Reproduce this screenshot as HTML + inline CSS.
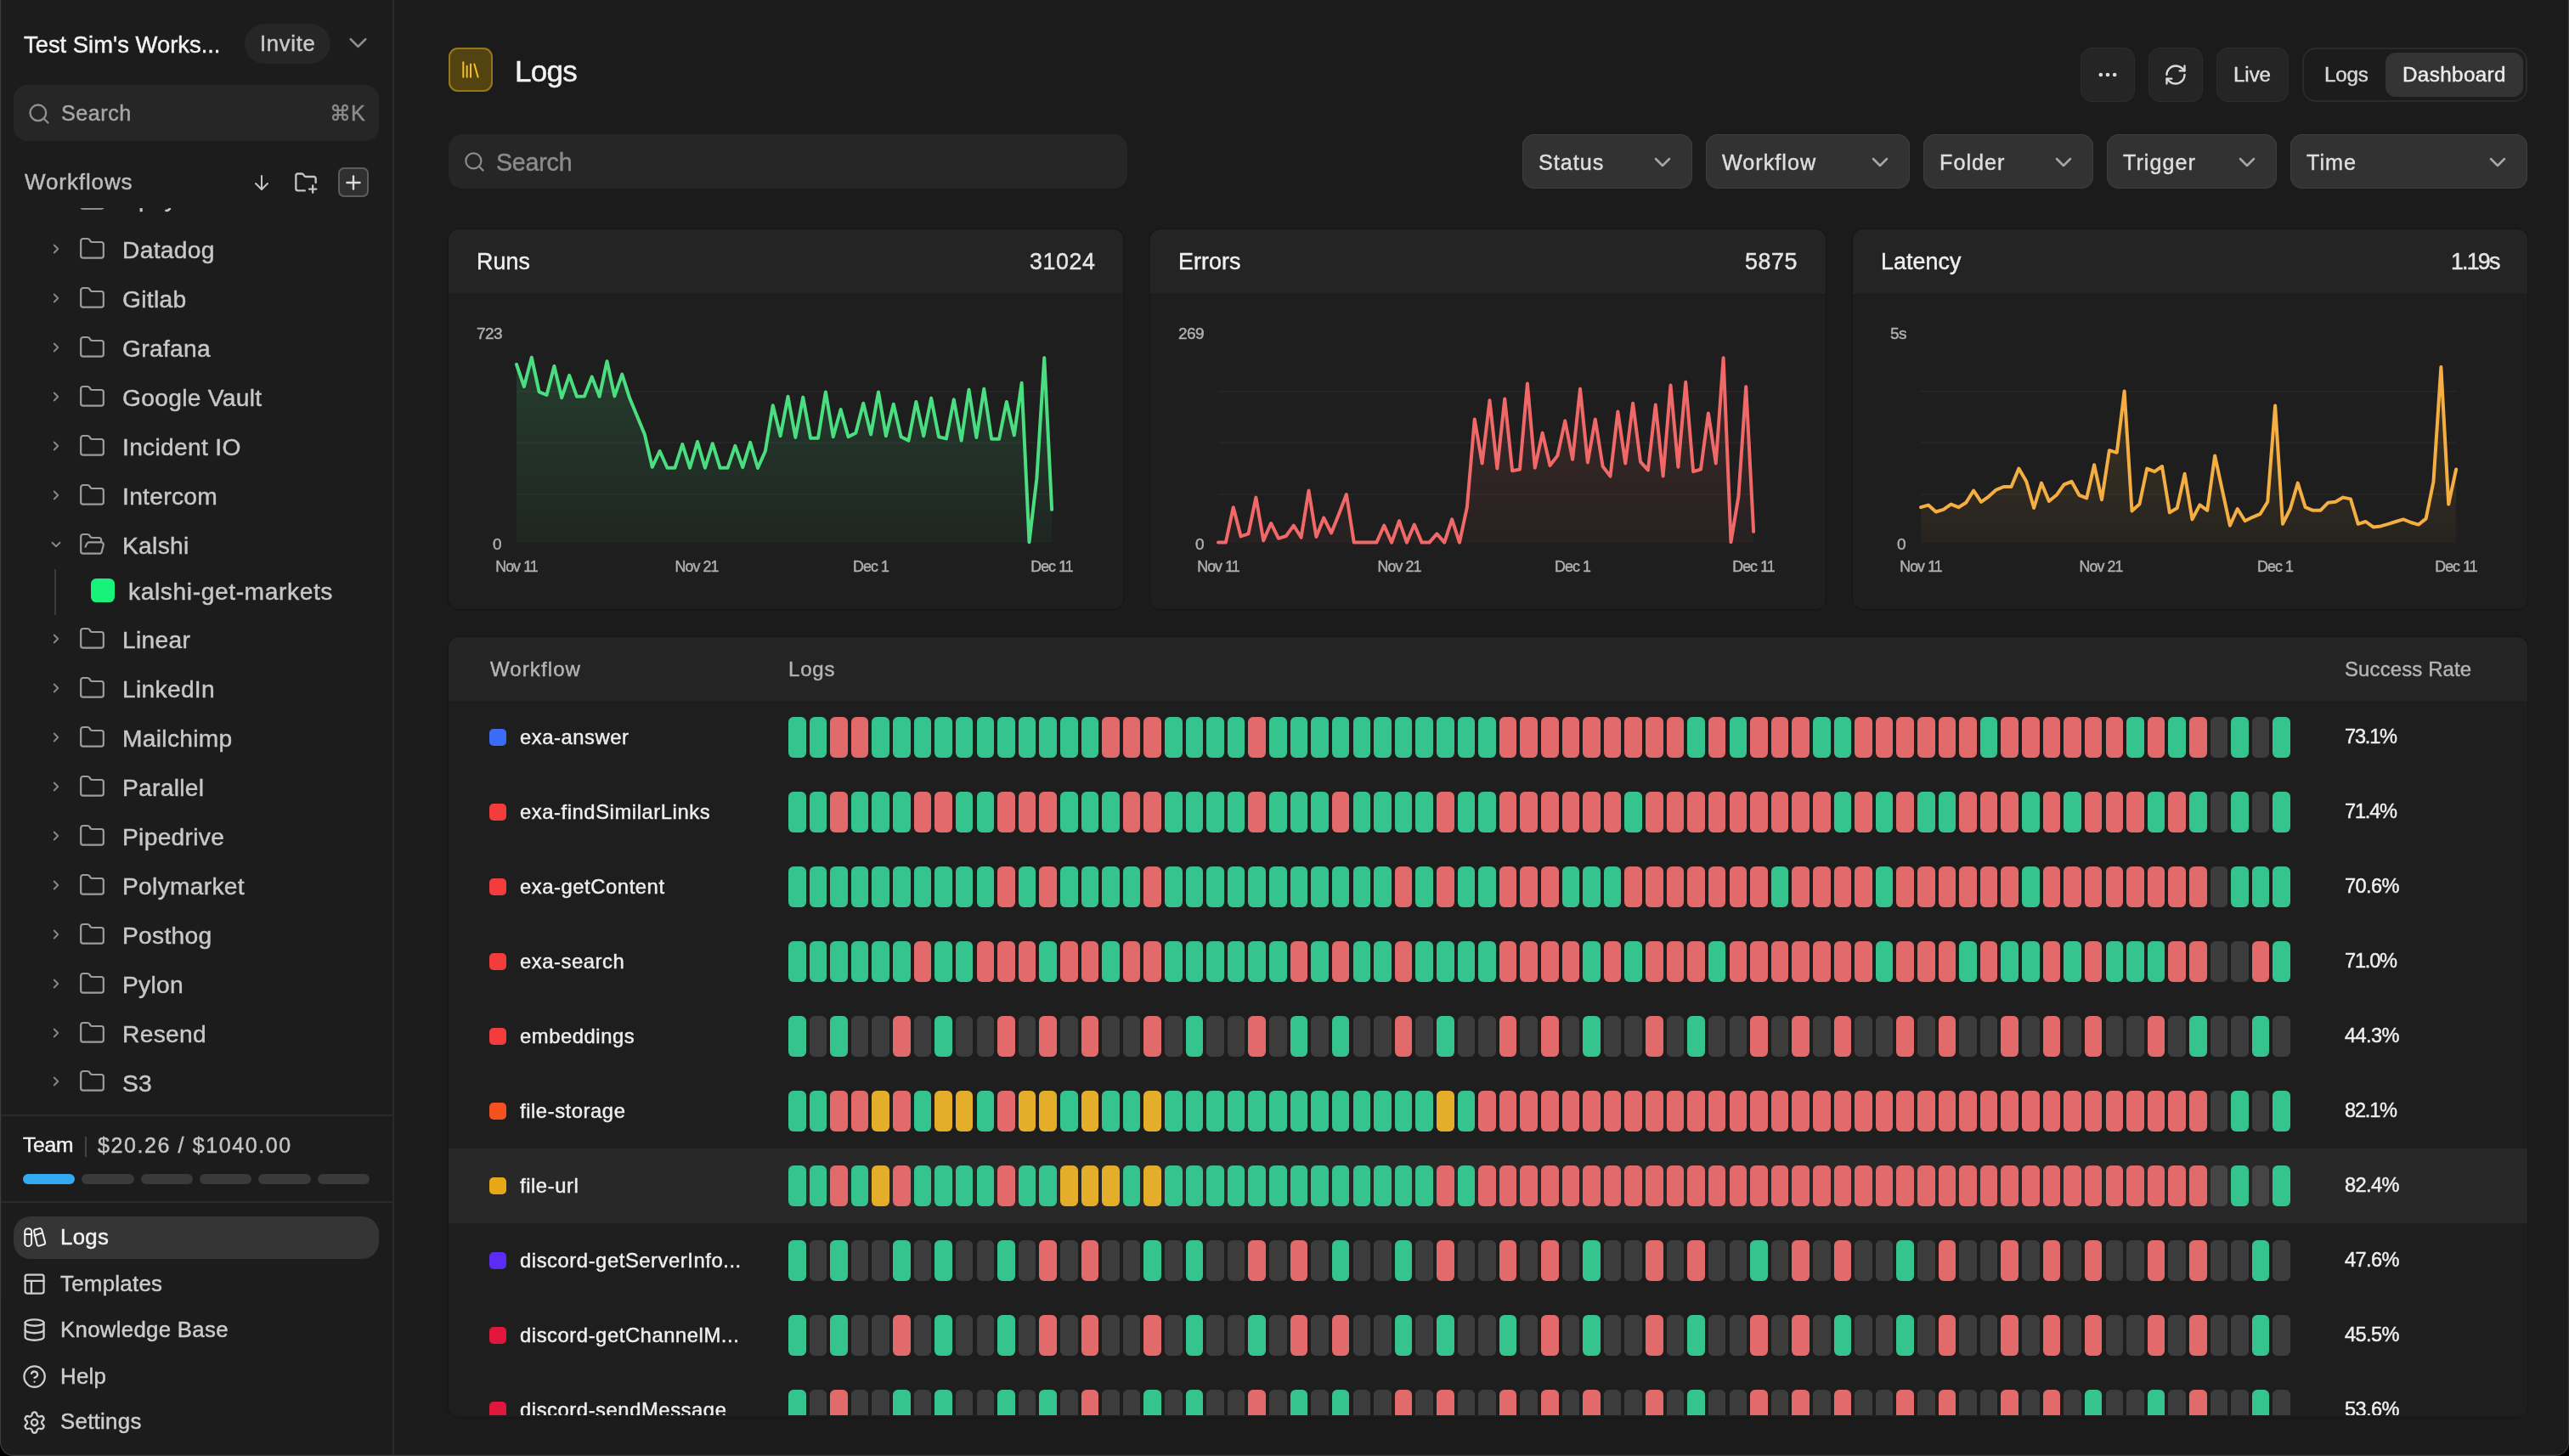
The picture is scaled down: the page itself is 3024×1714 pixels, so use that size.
<!DOCTYPE html><html><head><meta charset="utf-8"><style>
html,body{margin:0;padding:0;background:#000;}
body{zoom:2;width:1512px;height:857px;overflow:hidden;position:relative;font-family:"Liberation Sans", sans-serif;}
@media (max-width:2000px){body{zoom:1}}
.t{position:absolute;white-space:nowrap;line-height:1;-webkit-text-stroke:0.22px currentColor;will-change:transform;}
.b{position:absolute;display:block;}
.win{position:absolute;left:0;top:0;width:1512px;height:857px;background:#1b1b1b;border-radius:0 0 8px 8px;overflow:hidden;}
</style></head><body><div class="win">
<div class="b" style="left:0.00px;top:0.00px;width:231.50px;height:857.00px;background:#1c1c1c;border-radius:0px;"></div>
<div class="b" style="left:231.00px;top:0.00px;width:1.00px;height:857.00px;background:#2a2a2a;border-radius:0px;"></div>
<div class="t " style="left:14.00px;top:19.60px;font-size:13.7px;color:#f2f2f2;">Test Sim's Works...</div>
<div class="b" style="left:144.00px;top:14.20px;width:50.50px;height:23.50px;background:#262626;border-radius:12px;"></div>
<div class="t " style="left:153.00px;top:19.66px;font-size:12.8px;color:#c9c9c9;letter-spacing:0.35px;">Invite</div>
<svg class="b" style="left:202.00px;top:16.50px;" width="17.5" height="17.5" viewBox="0 0 24 24" fill="none" stroke="#8e8e8e" stroke-width="1.9" stroke-linecap="round" stroke-linejoin="round"><path d="m6 9 6 6 6-6"/></svg>
<div class="b" style="left:8.00px;top:50.00px;width:215.00px;height:33.00px;background:#262626;border-radius:8px;"></div>
<svg class="b" style="left:16.00px;top:60.00px;" width="14" height="14" viewBox="0 0 24 24" fill="none" stroke="#8f8f8f" stroke-width="2" stroke-linecap="round" stroke-linejoin="round"><circle cx="11" cy="11" r="8"/><path d="m21 21-4.3-4.3"/></svg>
<div class="t " style="left:36.00px;top:60.63px;font-size:12.6px;color:#a6a6a6;letter-spacing:0.25px;">Search</div>
<div class="t " style="left:194.00px;top:60.63px;font-size:12.6px;color:#8c8c8c;">&#8984;K</div>
<div class="t " style="left:14.50px;top:100.50px;font-size:13px;color:#bdbdbd;letter-spacing:0.45px;">Workflows</div>
<svg class="b" style="left:148.00px;top:101.50px;" width="12" height="12" viewBox="0 0 24 24" fill="none" stroke="#c4c4c4" stroke-width="2" stroke-linecap="round" stroke-linejoin="round"><path d="M12 4v16"/><path d="m19 13-7 7-7-7"/></svg>
<svg class="b" style="left:172.50px;top:100.50px;" width="15" height="14" viewBox="0 0 24 24" fill="none" stroke="#c4c4c4" stroke-width="2" stroke-linecap="round" stroke-linejoin="round"><path d="M11 20H4a2 2 0 0 1-2-2V5a2 2 0 0 1 2-2h3.9a2 2 0 0 1 1.69.9l.81 1.2a2 2 0 0 0 1.67.9H20a2 2 0 0 1 2 2v4"/><path d="M19 15v7"/><path d="M15.5 18.5h7"/></svg>
<div class="b" style="left:199.00px;top:98.40px;width:17.80px;height:17.60px;background:#303030;border-radius:3.5px;box-shadow:inset 0 0 0 1px #5c5c5c;"></div>
<svg class="b" style="left:201.50px;top:100.80px;" width="13" height="13" viewBox="0 0 24 24" fill="none" stroke="#dcdcdc" stroke-width="2.2" stroke-linecap="round" stroke-linejoin="round"><path d="M12 5v14"/><path d="M5 12h14"/></svg>
<div class="b" style="left:0;top:122.6px;width:231px;height:533.4px;overflow:hidden;">
<svg class="b" style="left:28.50px;top:-9.56px;" width="9" height="9" viewBox="0 0 24 24" fill="none" stroke="#8a8a8a" stroke-width="2.4" stroke-linecap="round" stroke-linejoin="round"><path d="m9 18 6-6-6-6"/></svg>
<svg class="b" style="left:45.00px;top:-13.06px;" width="18.5" height="16" viewBox="0 0 24 24" fill="none" stroke="#9d9d9d" stroke-width="1.65" stroke-linecap="round" stroke-linejoin="round"><path d="M20 20a2 2 0 0 0 2-2V8a2 2 0 0 0-2-2h-7.9a2 2 0 0 1-1.69-.9L9.6 3.9A2 2 0 0 0 7.93 3H4a2 2 0 0 0-2 2v13a2 2 0 0 0 2 2Z"/></svg>
<div class="t " style="left:72.00px;top:-13.00px;font-size:14.1px;color:#c8c8c8;letter-spacing:0.15px;">Apify</div>
<svg class="b" style="left:28.50px;top:19.40px;" width="9" height="9" viewBox="0 0 24 24" fill="none" stroke="#8a8a8a" stroke-width="2.4" stroke-linecap="round" stroke-linejoin="round"><path d="m9 18 6-6-6-6"/></svg>
<svg class="b" style="left:45.00px;top:15.90px;" width="18.5" height="16" viewBox="0 0 24 24" fill="none" stroke="#9d9d9d" stroke-width="1.65" stroke-linecap="round" stroke-linejoin="round"><path d="M20 20a2 2 0 0 0 2-2V8a2 2 0 0 0-2-2h-7.9a2 2 0 0 1-1.69-.9L9.6 3.9A2 2 0 0 0 7.93 3H4a2 2 0 0 0-2 2v13a2 2 0 0 0 2 2Z"/></svg>
<div class="t " style="left:72.00px;top:17.46px;font-size:14.1px;color:#c8c8c8;letter-spacing:0.15px;">Datadog</div>
<svg class="b" style="left:28.50px;top:48.36px;" width="9" height="9" viewBox="0 0 24 24" fill="none" stroke="#8a8a8a" stroke-width="2.4" stroke-linecap="round" stroke-linejoin="round"><path d="m9 18 6-6-6-6"/></svg>
<svg class="b" style="left:45.00px;top:44.86px;" width="18.5" height="16" viewBox="0 0 24 24" fill="none" stroke="#9d9d9d" stroke-width="1.65" stroke-linecap="round" stroke-linejoin="round"><path d="M20 20a2 2 0 0 0 2-2V8a2 2 0 0 0-2-2h-7.9a2 2 0 0 1-1.69-.9L9.6 3.9A2 2 0 0 0 7.93 3H4a2 2 0 0 0-2 2v13a2 2 0 0 0 2 2Z"/></svg>
<div class="t " style="left:72.00px;top:46.42px;font-size:14.1px;color:#c8c8c8;letter-spacing:0.15px;">Gitlab</div>
<svg class="b" style="left:28.50px;top:77.32px;" width="9" height="9" viewBox="0 0 24 24" fill="none" stroke="#8a8a8a" stroke-width="2.4" stroke-linecap="round" stroke-linejoin="round"><path d="m9 18 6-6-6-6"/></svg>
<svg class="b" style="left:45.00px;top:73.82px;" width="18.5" height="16" viewBox="0 0 24 24" fill="none" stroke="#9d9d9d" stroke-width="1.65" stroke-linecap="round" stroke-linejoin="round"><path d="M20 20a2 2 0 0 0 2-2V8a2 2 0 0 0-2-2h-7.9a2 2 0 0 1-1.69-.9L9.6 3.9A2 2 0 0 0 7.93 3H4a2 2 0 0 0-2 2v13a2 2 0 0 0 2 2Z"/></svg>
<div class="t " style="left:72.00px;top:75.38px;font-size:14.1px;color:#c8c8c8;letter-spacing:0.15px;">Grafana</div>
<svg class="b" style="left:28.50px;top:106.28px;" width="9" height="9" viewBox="0 0 24 24" fill="none" stroke="#8a8a8a" stroke-width="2.4" stroke-linecap="round" stroke-linejoin="round"><path d="m9 18 6-6-6-6"/></svg>
<svg class="b" style="left:45.00px;top:102.78px;" width="18.5" height="16" viewBox="0 0 24 24" fill="none" stroke="#9d9d9d" stroke-width="1.65" stroke-linecap="round" stroke-linejoin="round"><path d="M20 20a2 2 0 0 0 2-2V8a2 2 0 0 0-2-2h-7.9a2 2 0 0 1-1.69-.9L9.6 3.9A2 2 0 0 0 7.93 3H4a2 2 0 0 0-2 2v13a2 2 0 0 0 2 2Z"/></svg>
<div class="t " style="left:72.00px;top:104.34px;font-size:14.1px;color:#c8c8c8;letter-spacing:0.15px;">Google Vault</div>
<svg class="b" style="left:28.50px;top:135.24px;" width="9" height="9" viewBox="0 0 24 24" fill="none" stroke="#8a8a8a" stroke-width="2.4" stroke-linecap="round" stroke-linejoin="round"><path d="m9 18 6-6-6-6"/></svg>
<svg class="b" style="left:45.00px;top:131.74px;" width="18.5" height="16" viewBox="0 0 24 24" fill="none" stroke="#9d9d9d" stroke-width="1.65" stroke-linecap="round" stroke-linejoin="round"><path d="M20 20a2 2 0 0 0 2-2V8a2 2 0 0 0-2-2h-7.9a2 2 0 0 1-1.69-.9L9.6 3.9A2 2 0 0 0 7.93 3H4a2 2 0 0 0-2 2v13a2 2 0 0 0 2 2Z"/></svg>
<div class="t " style="left:72.00px;top:133.30px;font-size:14.1px;color:#c8c8c8;letter-spacing:0.15px;">Incident IO</div>
<svg class="b" style="left:28.50px;top:164.20px;" width="9" height="9" viewBox="0 0 24 24" fill="none" stroke="#8a8a8a" stroke-width="2.4" stroke-linecap="round" stroke-linejoin="round"><path d="m9 18 6-6-6-6"/></svg>
<svg class="b" style="left:45.00px;top:160.70px;" width="18.5" height="16" viewBox="0 0 24 24" fill="none" stroke="#9d9d9d" stroke-width="1.65" stroke-linecap="round" stroke-linejoin="round"><path d="M20 20a2 2 0 0 0 2-2V8a2 2 0 0 0-2-2h-7.9a2 2 0 0 1-1.69-.9L9.6 3.9A2 2 0 0 0 7.93 3H4a2 2 0 0 0-2 2v13a2 2 0 0 0 2 2Z"/></svg>
<div class="t " style="left:72.00px;top:162.26px;font-size:14.1px;color:#c8c8c8;letter-spacing:0.15px;">Intercom</div>
<svg class="b" style="left:28.50px;top:193.16px;" width="9" height="9" viewBox="0 0 24 24" fill="none" stroke="#8a8a8a" stroke-width="2.4" stroke-linecap="round" stroke-linejoin="round"><path d="m6 9 6 6 6-6"/></svg>
<svg class="b" style="left:45.00px;top:189.66px;" width="18.5" height="16" viewBox="0 0 24 24" fill="none" stroke="#9d9d9d" stroke-width="1.65" stroke-linecap="round" stroke-linejoin="round"><path d="m6 14 1.5-2.9A2 2 0 0 1 9.24 10H20a2 2 0 0 1 1.94 2.5l-1.54 6a2 2 0 0 1-1.95 1.5H4a2 2 0 0 1-2-2V5a2 2 0 0 1 2-2h3.9a2 2 0 0 1 1.69.9l.81 1.2a2 2 0 0 0 1.67.9H18a2 2 0 0 1 2 2v2"/></svg>
<div class="t " style="left:72.00px;top:191.22px;font-size:14.1px;color:#c8c8c8;letter-spacing:0.15px;">Kalshi</div>
<div class="b" style="left:32.00px;top:212.50px;width:0.80px;height:27.00px;background:#3a3a3a;border-radius:0px;"></div>
<div class="b" style="left:53.60px;top:218.10px;width:13.70px;height:13.70px;background:#18f27a;border-radius:3.2px;"></div>
<div class="t " style="left:75.50px;top:218.36px;font-size:14.1px;color:#c8c8c8;letter-spacing:0.3px;">kalshi-get-markets</div>
<svg class="b" style="left:28.50px;top:248.90px;" width="9" height="9" viewBox="0 0 24 24" fill="none" stroke="#8a8a8a" stroke-width="2.4" stroke-linecap="round" stroke-linejoin="round"><path d="m9 18 6-6-6-6"/></svg>
<svg class="b" style="left:45.00px;top:245.40px;" width="18.5" height="16" viewBox="0 0 24 24" fill="none" stroke="#9d9d9d" stroke-width="1.65" stroke-linecap="round" stroke-linejoin="round"><path d="M20 20a2 2 0 0 0 2-2V8a2 2 0 0 0-2-2h-7.9a2 2 0 0 1-1.69-.9L9.6 3.9A2 2 0 0 0 7.93 3H4a2 2 0 0 0-2 2v13a2 2 0 0 0 2 2Z"/></svg>
<div class="t " style="left:72.00px;top:246.96px;font-size:14.1px;color:#c8c8c8;letter-spacing:0.15px;">Linear</div>
<svg class="b" style="left:28.50px;top:277.87px;" width="9" height="9" viewBox="0 0 24 24" fill="none" stroke="#8a8a8a" stroke-width="2.4" stroke-linecap="round" stroke-linejoin="round"><path d="m9 18 6-6-6-6"/></svg>
<svg class="b" style="left:45.00px;top:274.37px;" width="18.5" height="16" viewBox="0 0 24 24" fill="none" stroke="#9d9d9d" stroke-width="1.65" stroke-linecap="round" stroke-linejoin="round"><path d="M20 20a2 2 0 0 0 2-2V8a2 2 0 0 0-2-2h-7.9a2 2 0 0 1-1.69-.9L9.6 3.9A2 2 0 0 0 7.93 3H4a2 2 0 0 0-2 2v13a2 2 0 0 0 2 2Z"/></svg>
<div class="t " style="left:72.00px;top:275.93px;font-size:14.1px;color:#c8c8c8;letter-spacing:0.15px;">LinkedIn</div>
<svg class="b" style="left:28.50px;top:306.84px;" width="9" height="9" viewBox="0 0 24 24" fill="none" stroke="#8a8a8a" stroke-width="2.4" stroke-linecap="round" stroke-linejoin="round"><path d="m9 18 6-6-6-6"/></svg>
<svg class="b" style="left:45.00px;top:303.34px;" width="18.5" height="16" viewBox="0 0 24 24" fill="none" stroke="#9d9d9d" stroke-width="1.65" stroke-linecap="round" stroke-linejoin="round"><path d="M20 20a2 2 0 0 0 2-2V8a2 2 0 0 0-2-2h-7.9a2 2 0 0 1-1.69-.9L9.6 3.9A2 2 0 0 0 7.93 3H4a2 2 0 0 0-2 2v13a2 2 0 0 0 2 2Z"/></svg>
<div class="t " style="left:72.00px;top:304.90px;font-size:14.1px;color:#c8c8c8;letter-spacing:0.15px;">Mailchimp</div>
<svg class="b" style="left:28.50px;top:335.81px;" width="9" height="9" viewBox="0 0 24 24" fill="none" stroke="#8a8a8a" stroke-width="2.4" stroke-linecap="round" stroke-linejoin="round"><path d="m9 18 6-6-6-6"/></svg>
<svg class="b" style="left:45.00px;top:332.31px;" width="18.5" height="16" viewBox="0 0 24 24" fill="none" stroke="#9d9d9d" stroke-width="1.65" stroke-linecap="round" stroke-linejoin="round"><path d="M20 20a2 2 0 0 0 2-2V8a2 2 0 0 0-2-2h-7.9a2 2 0 0 1-1.69-.9L9.6 3.9A2 2 0 0 0 7.93 3H4a2 2 0 0 0-2 2v13a2 2 0 0 0 2 2Z"/></svg>
<div class="t " style="left:72.00px;top:333.87px;font-size:14.1px;color:#c8c8c8;letter-spacing:0.15px;">Parallel</div>
<svg class="b" style="left:28.50px;top:364.78px;" width="9" height="9" viewBox="0 0 24 24" fill="none" stroke="#8a8a8a" stroke-width="2.4" stroke-linecap="round" stroke-linejoin="round"><path d="m9 18 6-6-6-6"/></svg>
<svg class="b" style="left:45.00px;top:361.28px;" width="18.5" height="16" viewBox="0 0 24 24" fill="none" stroke="#9d9d9d" stroke-width="1.65" stroke-linecap="round" stroke-linejoin="round"><path d="M20 20a2 2 0 0 0 2-2V8a2 2 0 0 0-2-2h-7.9a2 2 0 0 1-1.69-.9L9.6 3.9A2 2 0 0 0 7.93 3H4a2 2 0 0 0-2 2v13a2 2 0 0 0 2 2Z"/></svg>
<div class="t " style="left:72.00px;top:362.84px;font-size:14.1px;color:#c8c8c8;letter-spacing:0.15px;">Pipedrive</div>
<svg class="b" style="left:28.50px;top:393.75px;" width="9" height="9" viewBox="0 0 24 24" fill="none" stroke="#8a8a8a" stroke-width="2.4" stroke-linecap="round" stroke-linejoin="round"><path d="m9 18 6-6-6-6"/></svg>
<svg class="b" style="left:45.00px;top:390.25px;" width="18.5" height="16" viewBox="0 0 24 24" fill="none" stroke="#9d9d9d" stroke-width="1.65" stroke-linecap="round" stroke-linejoin="round"><path d="M20 20a2 2 0 0 0 2-2V8a2 2 0 0 0-2-2h-7.9a2 2 0 0 1-1.69-.9L9.6 3.9A2 2 0 0 0 7.93 3H4a2 2 0 0 0-2 2v13a2 2 0 0 0 2 2Z"/></svg>
<div class="t " style="left:72.00px;top:391.81px;font-size:14.1px;color:#c8c8c8;letter-spacing:0.15px;">Polymarket</div>
<svg class="b" style="left:28.50px;top:422.72px;" width="9" height="9" viewBox="0 0 24 24" fill="none" stroke="#8a8a8a" stroke-width="2.4" stroke-linecap="round" stroke-linejoin="round"><path d="m9 18 6-6-6-6"/></svg>
<svg class="b" style="left:45.00px;top:419.22px;" width="18.5" height="16" viewBox="0 0 24 24" fill="none" stroke="#9d9d9d" stroke-width="1.65" stroke-linecap="round" stroke-linejoin="round"><path d="M20 20a2 2 0 0 0 2-2V8a2 2 0 0 0-2-2h-7.9a2 2 0 0 1-1.69-.9L9.6 3.9A2 2 0 0 0 7.93 3H4a2 2 0 0 0-2 2v13a2 2 0 0 0 2 2Z"/></svg>
<div class="t " style="left:72.00px;top:420.78px;font-size:14.1px;color:#c8c8c8;letter-spacing:0.15px;">Posthog</div>
<svg class="b" style="left:28.50px;top:451.69px;" width="9" height="9" viewBox="0 0 24 24" fill="none" stroke="#8a8a8a" stroke-width="2.4" stroke-linecap="round" stroke-linejoin="round"><path d="m9 18 6-6-6-6"/></svg>
<svg class="b" style="left:45.00px;top:448.19px;" width="18.5" height="16" viewBox="0 0 24 24" fill="none" stroke="#9d9d9d" stroke-width="1.65" stroke-linecap="round" stroke-linejoin="round"><path d="M20 20a2 2 0 0 0 2-2V8a2 2 0 0 0-2-2h-7.9a2 2 0 0 1-1.69-.9L9.6 3.9A2 2 0 0 0 7.93 3H4a2 2 0 0 0-2 2v13a2 2 0 0 0 2 2Z"/></svg>
<div class="t " style="left:72.00px;top:449.75px;font-size:14.1px;color:#c8c8c8;letter-spacing:0.15px;">Pylon</div>
<svg class="b" style="left:28.50px;top:480.66px;" width="9" height="9" viewBox="0 0 24 24" fill="none" stroke="#8a8a8a" stroke-width="2.4" stroke-linecap="round" stroke-linejoin="round"><path d="m9 18 6-6-6-6"/></svg>
<svg class="b" style="left:45.00px;top:477.16px;" width="18.5" height="16" viewBox="0 0 24 24" fill="none" stroke="#9d9d9d" stroke-width="1.65" stroke-linecap="round" stroke-linejoin="round"><path d="M20 20a2 2 0 0 0 2-2V8a2 2 0 0 0-2-2h-7.9a2 2 0 0 1-1.69-.9L9.6 3.9A2 2 0 0 0 7.93 3H4a2 2 0 0 0-2 2v13a2 2 0 0 0 2 2Z"/></svg>
<div class="t " style="left:72.00px;top:478.72px;font-size:14.1px;color:#c8c8c8;letter-spacing:0.15px;">Resend</div>
<svg class="b" style="left:28.50px;top:509.63px;" width="9" height="9" viewBox="0 0 24 24" fill="none" stroke="#8a8a8a" stroke-width="2.4" stroke-linecap="round" stroke-linejoin="round"><path d="m9 18 6-6-6-6"/></svg>
<svg class="b" style="left:45.00px;top:506.13px;" width="18.5" height="16" viewBox="0 0 24 24" fill="none" stroke="#9d9d9d" stroke-width="1.65" stroke-linecap="round" stroke-linejoin="round"><path d="M20 20a2 2 0 0 0 2-2V8a2 2 0 0 0-2-2h-7.9a2 2 0 0 1-1.69-.9L9.6 3.9A2 2 0 0 0 7.93 3H4a2 2 0 0 0-2 2v13a2 2 0 0 0 2 2Z"/></svg>
<div class="t " style="left:72.00px;top:507.69px;font-size:14.1px;color:#c8c8c8;letter-spacing:0.15px;">S3</div>
<svg class="b" style="left:28.50px;top:538.60px;" width="9" height="9" viewBox="0 0 24 24" fill="none" stroke="#8a8a8a" stroke-width="2.4" stroke-linecap="round" stroke-linejoin="round"><path d="m9 18 6-6-6-6"/></svg>
<svg class="b" style="left:45.00px;top:535.10px;" width="18.5" height="16" viewBox="0 0 24 24" fill="none" stroke="#9d9d9d" stroke-width="1.65" stroke-linecap="round" stroke-linejoin="round"><path d="M20 20a2 2 0 0 0 2-2V8a2 2 0 0 0-2-2h-7.9a2 2 0 0 1-1.69-.9L9.6 3.9A2 2 0 0 0 7.93 3H4a2 2 0 0 0-2 2v13a2 2 0 0 0 2 2Z"/></svg>
<div class="t " style="left:72.00px;top:536.66px;font-size:14.1px;color:#c8c8c8;letter-spacing:0.15px;">Slack</div>
</div>
<div class="b" style="left:0.00px;top:656.00px;width:231.00px;height:0.80px;background:#2a2a2a;border-radius:0px;"></div>
<div class="t " style="left:13.70px;top:668.09px;font-size:12.3px;color:#f2f2f2;letter-spacing:-0.1px;">Team</div>
<div class="b" style="left:50.00px;top:669.00px;width:0.80px;height:12.00px;background:#444;border-radius:0px;"></div>
<div class="t " style="left:57.40px;top:667.92px;font-size:12.5px;color:#c4c4c4;letter-spacing:0.8px;">$20.26 / $1040.00</div>
<div class="b" style="left:13.40px;top:691.00px;width:30.60px;height:6.00px;background:#33aaf2;border-radius:3px;"></div>
<div class="b" style="left:48.00px;top:691.00px;width:31.00px;height:6.00px;background:#3a3a3a;border-radius:3px;"></div>
<div class="b" style="left:83.00px;top:691.00px;width:30.60px;height:6.00px;background:#3a3a3a;border-radius:3px;"></div>
<div class="b" style="left:117.60px;top:691.00px;width:30.40px;height:6.00px;background:#3a3a3a;border-radius:3px;"></div>
<div class="b" style="left:152.00px;top:691.00px;width:31.00px;height:6.00px;background:#3a3a3a;border-radius:3px;"></div>
<div class="b" style="left:187.00px;top:691.00px;width:30.70px;height:6.00px;background:#3a3a3a;border-radius:3px;"></div>
<div class="b" style="left:0.00px;top:707.00px;width:231.00px;height:0.80px;background:#2a2a2a;border-radius:0px;"></div>
<div class="b" style="left:8.00px;top:716.00px;width:215.00px;height:25.00px;background:#353535;border-radius:10px;"></div>
<svg class="b" style="left:10.00px;top:715.00px;" width="30" height="30" viewBox="0 0 60 60" fill="none" stroke="#f2f2f2" stroke-width="2" stroke-linecap="round" stroke-linejoin="round"><rect x="9.3" y="16.2" width="7.8" height="20.7" rx="3.6"/><path d="M9.3 23H17.1"/><path d="M20.2 20.2Q19.6 17.9 21.8 17.3L26.4 16.1Q28.6 15.6 29.2 17.8L33 32.2Q33.6 34.4 31.4 35L26.4 36.6Q24.2 37.2 23.6 35Z"/><path d="M20.6 24.6L28.6 21.8"/></svg>
<div class="t " style="left:35.50px;top:722.18px;font-size:12.9px;color:#f2f2f2;letter-spacing:0.15px;">Logs</div>
<svg class="b" style="left:13.00px;top:748.50px;" width="14.6" height="14.6" viewBox="0 0 24 24" fill="none" stroke="#cdcdcd" stroke-width="1.9" stroke-linecap="round" stroke-linejoin="round"><rect width="18" height="18" x="3" y="3" rx="2"/><path d="M3 9h18"/><path d="M9 21V9"/></svg>
<div class="t " style="left:35.50px;top:749.28px;font-size:12.9px;color:#cdcdcd;letter-spacing:0.15px;">Templates</div>
<svg class="b" style="left:13.00px;top:775.70px;" width="14.6" height="14.6" viewBox="0 0 24 24" fill="none" stroke="#cdcdcd" stroke-width="1.9" stroke-linecap="round" stroke-linejoin="round"><ellipse cx="12" cy="5" rx="9" ry="3"/><path d="M3 5V19A9 3 0 0 0 21 19V5"/><path d="M3 12A9 3 0 0 0 21 12"/></svg>
<div class="t " style="left:35.50px;top:776.48px;font-size:12.9px;color:#cdcdcd;letter-spacing:0.15px;">Knowledge Base</div>
<svg class="b" style="left:13.00px;top:803.00px;" width="14.6" height="14.6" viewBox="0 0 24 24" fill="none" stroke="#cdcdcd" stroke-width="1.9" stroke-linecap="round" stroke-linejoin="round"><circle cx="12" cy="12" r="10"/><path d="M9.09 9a3 3 0 0 1 5.83 1c0 2-3 3-3 3"/><path d="M12 17h.01"/></svg>
<div class="t " style="left:35.50px;top:803.78px;font-size:12.9px;color:#cdcdcd;letter-spacing:0.15px;">Help</div>
<svg class="b" style="left:13.00px;top:829.80px;" width="14.6" height="14.6" viewBox="0 0 24 24" fill="none" stroke="#cdcdcd" stroke-width="1.9" stroke-linecap="round" stroke-linejoin="round"><path d="M9.671 4.136a2.34 2.34 0 0 1 4.659 0 2.34 2.34 0 0 0 3.319 1.915 2.34 2.34 0 0 1 2.33 4.033 2.34 2.34 0 0 0 0 3.831 2.34 2.34 0 0 1-2.33 4.033 2.34 2.34 0 0 0-3.319 1.915 2.34 2.34 0 0 1-4.659 0 2.34 2.34 0 0 0-3.32-1.915 2.34 2.34 0 0 1-2.33-4.033 2.34 2.34 0 0 0 0-3.831A2.34 2.34 0 0 1 6.35 6.051a2.34 2.34 0 0 0 3.319-1.915"/><circle cx="12" cy="12" r="3"/></svg>
<div class="t " style="left:35.50px;top:830.58px;font-size:12.9px;color:#cdcdcd;letter-spacing:0.15px;">Settings</div>
<div class="b" style="left:264.00px;top:28.00px;width:26.00px;height:26.00px;background:#534310;border-radius:5.5px;box-shadow:inset 0 0 0 1px #94761f;"></div>
<svg class="b" style="left:270.50px;top:34.50px;" width="13" height="13" viewBox="0 0 24 24" fill="none" stroke="#f6c420" stroke-width="1.8" stroke-linecap="round" stroke-linejoin="round"><path d="m16 6 4 14"/><path d="M12 6v14"/><path d="M8 8v12"/><path d="M4 4v16"/></svg>
<div class="t " style="left:303.00px;top:33.19px;font-size:17.5px;color:#f2f2f2;letter-spacing:-0.35px;">Logs</div>
<div class="b" style="left:1224.50px;top:28.00px;width:32.00px;height:32.00px;background:#252525;border-radius:7px;box-shadow:inset 0 0 0 0.5px #2c2c2c;"></div>
<svg class="b" style="left:1233.50px;top:37.00px;" width="14" height="14" viewBox="0 0 24 24" fill="none" stroke="#ddd" stroke-width="1.6" stroke-linecap="round" stroke-linejoin="round"><circle cx="12" cy="12" r="1.2" fill="#ddd"/><circle cx="19" cy="12" r="1.2" fill="#ddd"/><circle cx="5" cy="12" r="1.2" fill="#ddd"/></svg>
<div class="b" style="left:1264.50px;top:28.00px;width:32.00px;height:32.00px;background:#252525;border-radius:7px;box-shadow:inset 0 0 0 0.5px #2c2c2c;"></div>
<svg class="b" style="left:1273.50px;top:37.00px;" width="14" height="14" viewBox="0 0 24 24" fill="none" stroke="#dadada" stroke-width="2" stroke-linecap="round" stroke-linejoin="round"><path d="M3 12a9 9 0 0 1 9-9 9.75 9.75 0 0 1 6.74 2.74L21 8"/><path d="M21 3v5h-5"/><path d="M21 12a9 9 0 0 1-9 9 9.75 9.75 0 0 1-6.74-2.74L3 16"/><path d="M8 16H3v5"/></svg>
<div class="b" style="left:1304.50px;top:28.00px;width:42.50px;height:32.00px;background:#252525;border-radius:7px;box-shadow:inset 0 0 0 0.5px #2c2c2c;"></div>
<div class="t " style="left:1314.60px;top:38.16px;font-size:12.1px;color:#dedede;letter-spacing:-0.05px;">Live</div>
<div class="b" style="left:1355.00px;top:28.00px;width:132.50px;height:32.00px;background:#1c1c1c;border-radius:8px;box-shadow:inset 0 0 0 1px #2a2a2a;"></div>
<div class="b" style="left:1404.00px;top:31.00px;width:81.00px;height:26.00px;background:#343434;border-radius:6px;"></div>
<div class="t " style="left:1367.80px;top:38.16px;font-size:12.1px;color:#d6d6d6;letter-spacing:-0.1px;">Logs</div>
<div class="t " style="left:1413.80px;top:38.16px;font-size:12.1px;color:#ececec;letter-spacing:0.2px;">Dashboard</div>
<div class="b" style="left:264.00px;top:79.00px;width:399.50px;height:32.00px;background:#262626;border-radius:8px;"></div>
<svg class="b" style="left:272.50px;top:88.50px;" width="13.5" height="13.5" viewBox="0 0 24 24" fill="none" stroke="#8a8a8a" stroke-width="2" stroke-linecap="round" stroke-linejoin="round"><circle cx="11" cy="11" r="8"/><path d="m21 21-4.3-4.3"/></svg>
<div class="t " style="left:292.00px;top:88.40px;font-size:14.3px;color:#8c8c8c;letter-spacing:-0.1px;">Search</div>
<div class="b" style="left:896.00px;top:79.00px;width:100.00px;height:32.00px;background:#323232;border-radius:7px;box-shadow:inset 0 0 0 0.5px #3d3d3d;"></div>
<div class="t " style="left:905.50px;top:89.33px;font-size:12.6px;color:#dedede;letter-spacing:0.5px;">Status</div>
<svg class="b" style="left:970.50px;top:87.50px;" width="16" height="16" viewBox="0 0 24 24" fill="none" stroke="#a8a8a8" stroke-width="1.9" stroke-linecap="round" stroke-linejoin="round"><path d="m6 9 6 6 6-6"/></svg>
<div class="b" style="left:1004.00px;top:79.00px;width:120.00px;height:32.00px;background:#323232;border-radius:7px;box-shadow:inset 0 0 0 0.5px #3d3d3d;"></div>
<div class="t " style="left:1013.50px;top:89.33px;font-size:12.6px;color:#dedede;letter-spacing:0.5px;">Workflow</div>
<svg class="b" style="left:1098.50px;top:87.50px;" width="16" height="16" viewBox="0 0 24 24" fill="none" stroke="#a8a8a8" stroke-width="1.9" stroke-linecap="round" stroke-linejoin="round"><path d="m6 9 6 6 6-6"/></svg>
<div class="b" style="left:1132.00px;top:79.00px;width:100.00px;height:32.00px;background:#323232;border-radius:7px;box-shadow:inset 0 0 0 0.5px #3d3d3d;"></div>
<div class="t " style="left:1141.50px;top:89.33px;font-size:12.6px;color:#dedede;letter-spacing:0.5px;">Folder</div>
<svg class="b" style="left:1206.50px;top:87.50px;" width="16" height="16" viewBox="0 0 24 24" fill="none" stroke="#a8a8a8" stroke-width="1.9" stroke-linecap="round" stroke-linejoin="round"><path d="m6 9 6 6 6-6"/></svg>
<div class="b" style="left:1240.00px;top:79.00px;width:100.00px;height:32.00px;background:#323232;border-radius:7px;box-shadow:inset 0 0 0 0.5px #3d3d3d;"></div>
<div class="t " style="left:1249.50px;top:89.33px;font-size:12.6px;color:#dedede;letter-spacing:0.5px;">Trigger</div>
<svg class="b" style="left:1314.50px;top:87.50px;" width="16" height="16" viewBox="0 0 24 24" fill="none" stroke="#a8a8a8" stroke-width="1.9" stroke-linecap="round" stroke-linejoin="round"><path d="m6 9 6 6 6-6"/></svg>
<div class="b" style="left:1348.00px;top:79.00px;width:139.50px;height:32.00px;background:#323232;border-radius:7px;box-shadow:inset 0 0 0 0.5px #3d3d3d;"></div>
<div class="t " style="left:1357.50px;top:89.33px;font-size:12.6px;color:#dedede;letter-spacing:0.5px;">Time</div>
<svg class="b" style="left:1462.00px;top:87.50px;" width="16" height="16" viewBox="0 0 24 24" fill="none" stroke="#a8a8a8" stroke-width="1.9" stroke-linecap="round" stroke-linejoin="round"><path d="m6 9 6 6 6-6"/></svg>
<div class="b" style="left:264.00px;top:135.00px;width:397.17px;height:223.50px;background:#1e1e1e;border-radius:6px;box-shadow:0 0 0 0.6px #171717;"></div>
<div class="b" style="left:264.00px;top:135.00px;width:397.17px;height:38.00px;background:#242424;border-radius:0px;border-radius:6px 6px 0 0;box-shadow:0 0.5px 0 #1a1a1a;"></div>
<div class="t " style="left:280.50px;top:147.46px;font-size:13.4px;color:#f0f0f0;letter-spacing:0.05px;">Runs</div>
<div class="t" style="right:867.33px;top:147.46px;font-size:13.4px;color:#e6e6e6;letter-spacing:0.3px;">31024</div>
<div class="t" style="right:1216.50px;top:191.46px;font-size:9.5px;color:#b0b0b0;letter-spacing:-0.3px;">723</div>
<div class="t" style="right:1216.50px;top:315.26px;font-size:9.5px;color:#b0b0b0;">0</div>
<div class="t" style="left:204.00px;width:200px;text-align:center;top:329.37px;font-size:8.9px;color:#b0b0b0;letter-spacing:-0.45px;">Nov 11</div>
<div class="t" style="left:310.20px;width:200px;text-align:center;top:329.37px;font-size:8.9px;color:#b0b0b0;letter-spacing:-0.45px;">Nov 21</div>
<div class="t" style="left:412.50px;width:200px;text-align:center;top:329.37px;font-size:8.9px;color:#b0b0b0;letter-spacing:-0.45px;">Dec 1</div>
<div class="t" style="left:519.00px;width:200px;text-align:center;top:329.37px;font-size:8.9px;color:#b0b0b0;letter-spacing:-0.45px;">Dec 11</div>
<svg class="b" style="left:300.0px;top:195px" width="323" height="130" viewBox="0 0 323 130"><defs><linearGradient id="g0" x1="0" y1="0" x2="0" y2="1"><stop offset="0" stop-color="rgb(74,222,128)" stop-opacity="0.16"/><stop offset="1" stop-color="rgb(74,222,128)" stop-opacity="0.04"/></linearGradient></defs><line x1="4.00" x2="319.06" y1="35.40" y2="35.40" stroke="#2a2a2a" stroke-width="0.6"/><line x1="4.00" x2="319.06" y1="65.60" y2="65.60" stroke="#2a2a2a" stroke-width="0.6"/><line x1="4.00" x2="319.06" y1="95.90" y2="95.90" stroke="#2a2a2a" stroke-width="0.6"/><path d="M4.00 19.50 L8.44 32.60 L12.88 15.40 L17.31 35.70 L21.75 37.50 L26.19 20.50 L30.62 39.10 L35.06 25.90 L39.50 38.40 L43.94 38.20 L48.38 26.80 L52.81 38.40 L57.25 17.60 L61.69 38.20 L66.12 25.30 L70.56 39.30 L75.00 50.00 L79.44 60.70 L83.88 79.90 L88.31 70.50 L92.75 80.40 L97.19 80.40 L101.62 66.50 L106.06 80.40 L110.50 65.00 L114.94 80.40 L119.38 66.10 L123.81 80.40 L128.25 80.40 L132.69 67.40 L137.12 80.10 L141.56 65.40 L146.00 80.50 L150.44 70.50 L154.88 43.60 L159.31 61.60 L163.75 38.40 L168.19 62.50 L172.62 38.80 L177.06 62.90 L181.50 62.90 L185.94 35.70 L190.38 62.10 L194.81 46.00 L199.25 62.10 L203.69 59.80 L208.12 42.40 L212.56 60.70 L217.00 35.70 L221.44 61.60 L225.88 42.90 L230.31 62.10 L234.75 64.30 L239.19 41.50 L243.62 61.60 L248.06 39.30 L252.50 62.10 L256.94 63.20 L261.38 40.20 L265.81 64.30 L270.25 34.40 L274.69 62.50 L279.12 33.90 L283.56 63.40 L288.00 63.40 L292.44 41.50 L296.88 61.20 L301.31 30.40 L305.75 124.10 L310.19 86.60 L314.62 15.60 L319.06 104.90 L319.06 124.50 L4.00 124.50 Z" fill="url(#g0)" stroke="none"/><path d="M4.00 19.50 L8.44 32.60 L12.88 15.40 L17.31 35.70 L21.75 37.50 L26.19 20.50 L30.62 39.10 L35.06 25.90 L39.50 38.40 L43.94 38.20 L48.38 26.80 L52.81 38.40 L57.25 17.60 L61.69 38.20 L66.12 25.30 L70.56 39.30 L75.00 50.00 L79.44 60.70 L83.88 79.90 L88.31 70.50 L92.75 80.40 L97.19 80.40 L101.62 66.50 L106.06 80.40 L110.50 65.00 L114.94 80.40 L119.38 66.10 L123.81 80.40 L128.25 80.40 L132.69 67.40 L137.12 80.10 L141.56 65.40 L146.00 80.50 L150.44 70.50 L154.88 43.60 L159.31 61.60 L163.75 38.40 L168.19 62.50 L172.62 38.80 L177.06 62.90 L181.50 62.90 L185.94 35.70 L190.38 62.10 L194.81 46.00 L199.25 62.10 L203.69 59.80 L208.12 42.40 L212.56 60.70 L217.00 35.70 L221.44 61.60 L225.88 42.90 L230.31 62.10 L234.75 64.30 L239.19 41.50 L243.62 61.60 L248.06 39.30 L252.50 62.10 L256.94 63.20 L261.38 40.20 L265.81 64.30 L270.25 34.40 L274.69 62.50 L279.12 33.90 L283.56 63.40 L288.00 63.40 L292.44 41.50 L296.88 61.20 L301.31 30.40 L305.75 124.10 L310.19 86.60 L314.62 15.60 L319.06 104.90" fill="none" stroke="#4ade80" stroke-width="2" stroke-linejoin="round" stroke-linecap="round"/></svg>
<div class="b" style="left:677.17px;top:135.00px;width:397.17px;height:223.50px;background:#1e1e1e;border-radius:6px;box-shadow:0 0 0 0.6px #171717;"></div>
<div class="b" style="left:677.17px;top:135.00px;width:397.17px;height:38.00px;background:#242424;border-radius:0px;border-radius:6px 6px 0 0;box-shadow:0 0.5px 0 #1a1a1a;"></div>
<div class="t " style="left:693.67px;top:147.46px;font-size:13.4px;color:#f0f0f0;letter-spacing:0.05px;">Errors</div>
<div class="t" style="right:454.16px;top:147.46px;font-size:13.4px;color:#e6e6e6;letter-spacing:0.3px;">5875</div>
<div class="t" style="right:803.33px;top:191.46px;font-size:9.5px;color:#b0b0b0;letter-spacing:-0.3px;">269</div>
<div class="t" style="right:803.33px;top:315.26px;font-size:9.5px;color:#b0b0b0;">0</div>
<div class="t" style="left:617.17px;width:200px;text-align:center;top:329.37px;font-size:8.9px;color:#b0b0b0;letter-spacing:-0.45px;">Nov 11</div>
<div class="t" style="left:723.37px;width:200px;text-align:center;top:329.37px;font-size:8.9px;color:#b0b0b0;letter-spacing:-0.45px;">Nov 21</div>
<div class="t" style="left:825.67px;width:200px;text-align:center;top:329.37px;font-size:8.9px;color:#b0b0b0;letter-spacing:-0.45px;">Dec 1</div>
<div class="t" style="left:932.17px;width:200px;text-align:center;top:329.37px;font-size:8.9px;color:#b0b0b0;letter-spacing:-0.45px;">Dec 11</div>
<svg class="b" style="left:713.1700000000001px;top:195px" width="323" height="130" viewBox="0 0 323 130"><defs><linearGradient id="g1" x1="0" y1="0" x2="0" y2="1"><stop offset="0" stop-color="rgb(241,104,104)" stop-opacity="0.16"/><stop offset="1" stop-color="rgb(241,104,104)" stop-opacity="0.04"/></linearGradient></defs><line x1="4.00" x2="319.06" y1="35.40" y2="35.40" stroke="#2a2a2a" stroke-width="0.6"/><line x1="4.00" x2="319.06" y1="65.60" y2="65.60" stroke="#2a2a2a" stroke-width="0.6"/><line x1="4.00" x2="319.06" y1="95.90" y2="95.90" stroke="#2a2a2a" stroke-width="0.6"/><path d="M4.00 124.30 L8.44 124.30 L12.88 103.60 L17.31 120.70 L21.75 119.20 L26.19 97.80 L30.62 123.20 L35.06 113.00 L39.50 121.90 L43.94 120.50 L48.38 114.30 L52.81 121.40 L57.25 93.75 L61.69 121.00 L66.12 109.80 L70.56 118.75 L75.00 107.60 L79.44 96.00 L83.88 124.30 L88.31 124.30 L92.75 124.30 L97.19 124.30 L101.62 114.30 L106.06 124.30 L110.50 111.60 L114.94 124.30 L119.38 113.80 L123.81 124.30 L128.25 124.30 L132.69 119.20 L137.12 124.30 L141.56 110.70 L146.00 124.30 L150.44 103.60 L154.88 51.80 L159.31 77.70 L163.75 40.60 L168.19 80.80 L172.62 39.70 L177.06 82.10 L181.50 81.25 L185.94 30.80 L190.38 80.40 L194.81 59.80 L199.25 79.00 L203.69 73.20 L208.12 52.70 L212.56 75.40 L217.00 33.90 L221.44 77.20 L225.88 51.80 L230.31 79.50 L234.75 85.30 L239.19 47.30 L243.62 77.70 L248.06 42.40 L252.50 76.80 L256.94 81.70 L261.38 43.30 L265.81 85.30 L270.25 31.70 L274.69 79.90 L279.12 29.90 L283.56 82.60 L288.00 81.25 L292.44 48.20 L296.88 77.70 L301.31 15.60 L305.75 124.10 L310.19 97.30 L314.62 32.60 L319.06 117.90 L319.06 124.50 L4.00 124.50 Z" fill="url(#g1)" stroke="none"/><path d="M4.00 124.30 L8.44 124.30 L12.88 103.60 L17.31 120.70 L21.75 119.20 L26.19 97.80 L30.62 123.20 L35.06 113.00 L39.50 121.90 L43.94 120.50 L48.38 114.30 L52.81 121.40 L57.25 93.75 L61.69 121.00 L66.12 109.80 L70.56 118.75 L75.00 107.60 L79.44 96.00 L83.88 124.30 L88.31 124.30 L92.75 124.30 L97.19 124.30 L101.62 114.30 L106.06 124.30 L110.50 111.60 L114.94 124.30 L119.38 113.80 L123.81 124.30 L128.25 124.30 L132.69 119.20 L137.12 124.30 L141.56 110.70 L146.00 124.30 L150.44 103.60 L154.88 51.80 L159.31 77.70 L163.75 40.60 L168.19 80.80 L172.62 39.70 L177.06 82.10 L181.50 81.25 L185.94 30.80 L190.38 80.40 L194.81 59.80 L199.25 79.00 L203.69 73.20 L208.12 52.70 L212.56 75.40 L217.00 33.90 L221.44 77.20 L225.88 51.80 L230.31 79.50 L234.75 85.30 L239.19 47.30 L243.62 77.70 L248.06 42.40 L252.50 76.80 L256.94 81.70 L261.38 43.30 L265.81 85.30 L270.25 31.70 L274.69 79.90 L279.12 29.90 L283.56 82.60 L288.00 81.25 L292.44 48.20 L296.88 77.70 L301.31 15.60 L305.75 124.10 L310.19 97.30 L314.62 32.60 L319.06 117.90" fill="none" stroke="#f16868" stroke-width="2" stroke-linejoin="round" stroke-linecap="round"/></svg>
<div class="b" style="left:1090.34px;top:135.00px;width:397.17px;height:223.50px;background:#1e1e1e;border-radius:6px;box-shadow:0 0 0 0.6px #171717;"></div>
<div class="b" style="left:1090.34px;top:135.00px;width:397.17px;height:38.00px;background:#242424;border-radius:0px;border-radius:6px 6px 0 0;box-shadow:0 0.5px 0 #1a1a1a;"></div>
<div class="t " style="left:1106.84px;top:147.46px;font-size:13.4px;color:#f0f0f0;letter-spacing:0.05px;">Latency</div>
<div class="t" style="right:40.99px;top:147.46px;font-size:13.4px;color:#e6e6e6;letter-spacing:-0.9px;">1.19s</div>
<div class="t" style="right:390.16px;top:191.46px;font-size:9.5px;color:#b0b0b0;letter-spacing:-0.3px;">5s</div>
<div class="t" style="right:390.16px;top:315.26px;font-size:9.5px;color:#b0b0b0;">0</div>
<div class="t" style="left:1030.34px;width:200px;text-align:center;top:329.37px;font-size:8.9px;color:#b0b0b0;letter-spacing:-0.45px;">Nov 11</div>
<div class="t" style="left:1136.54px;width:200px;text-align:center;top:329.37px;font-size:8.9px;color:#b0b0b0;letter-spacing:-0.45px;">Nov 21</div>
<div class="t" style="left:1238.84px;width:200px;text-align:center;top:329.37px;font-size:8.9px;color:#b0b0b0;letter-spacing:-0.45px;">Dec 1</div>
<div class="t" style="left:1345.34px;width:200px;text-align:center;top:329.37px;font-size:8.9px;color:#b0b0b0;letter-spacing:-0.45px;">Dec 11</div>
<svg class="b" style="left:1126.3400000000001px;top:195px" width="323" height="130" viewBox="0 0 323 130"><defs><linearGradient id="g2" x1="0" y1="0" x2="0" y2="1"><stop offset="0" stop-color="rgb(245,174,66)" stop-opacity="0.16"/><stop offset="1" stop-color="rgb(245,174,66)" stop-opacity="0.04"/></linearGradient></defs><line x1="4.00" x2="319.06" y1="35.40" y2="35.40" stroke="#2a2a2a" stroke-width="0.6"/><line x1="4.00" x2="319.06" y1="65.60" y2="65.60" stroke="#2a2a2a" stroke-width="0.6"/><line x1="4.00" x2="319.06" y1="95.90" y2="95.90" stroke="#2a2a2a" stroke-width="0.6"/><path d="M4.00 103.60 L8.44 102.30 L12.88 106.25 L17.31 104.90 L21.75 101.80 L26.19 103.60 L30.62 100.90 L35.06 93.75 L39.50 100.40 L43.94 97.30 L48.38 93.30 L52.81 91.50 L57.25 91.50 L61.69 80.80 L66.12 88.40 L70.56 104.00 L75.00 89.30 L79.44 100.00 L83.88 96.40 L88.31 90.20 L92.75 88.40 L97.19 96.40 L101.62 98.20 L106.06 78.60 L110.50 99.10 L114.94 70.10 L119.38 71.40 L123.81 35.30 L128.25 105.80 L132.69 101.80 L137.12 80.80 L141.56 82.60 L146.00 79.50 L150.44 106.70 L154.88 104.00 L159.31 83.90 L163.75 110.70 L168.19 102.20 L172.62 105.40 L177.06 73.20 L181.50 93.75 L185.94 114.30 L190.38 104.50 L194.81 111.60 L199.25 109.40 L203.69 107.60 L208.12 100.40 L212.56 43.75 L217.00 113.40 L221.44 104.50 L225.88 89.30 L230.31 103.60 L234.75 105.40 L239.19 105.40 L243.62 100.90 L248.06 100.40 L252.50 97.80 L256.94 98.70 L261.38 113.40 L265.81 112.00 L270.25 115.20 L274.69 114.70 L279.12 113.40 L283.56 112.00 L288.00 110.70 L292.44 112.50 L296.88 113.80 L301.31 110.30 L305.75 88.40 L310.19 21.00 L314.62 101.80 L319.06 81.25 L319.06 124.50 L4.00 124.50 Z" fill="url(#g2)" stroke="none"/><path d="M4.00 103.60 L8.44 102.30 L12.88 106.25 L17.31 104.90 L21.75 101.80 L26.19 103.60 L30.62 100.90 L35.06 93.75 L39.50 100.40 L43.94 97.30 L48.38 93.30 L52.81 91.50 L57.25 91.50 L61.69 80.80 L66.12 88.40 L70.56 104.00 L75.00 89.30 L79.44 100.00 L83.88 96.40 L88.31 90.20 L92.75 88.40 L97.19 96.40 L101.62 98.20 L106.06 78.60 L110.50 99.10 L114.94 70.10 L119.38 71.40 L123.81 35.30 L128.25 105.80 L132.69 101.80 L137.12 80.80 L141.56 82.60 L146.00 79.50 L150.44 106.70 L154.88 104.00 L159.31 83.90 L163.75 110.70 L168.19 102.20 L172.62 105.40 L177.06 73.20 L181.50 93.75 L185.94 114.30 L190.38 104.50 L194.81 111.60 L199.25 109.40 L203.69 107.60 L208.12 100.40 L212.56 43.75 L217.00 113.40 L221.44 104.50 L225.88 89.30 L230.31 103.60 L234.75 105.40 L239.19 105.40 L243.62 100.90 L248.06 100.40 L252.50 97.80 L256.94 98.70 L261.38 113.40 L265.81 112.00 L270.25 115.20 L274.69 114.70 L279.12 113.40 L283.56 112.00 L288.00 110.70 L292.44 112.50 L296.88 113.80 L301.31 110.30 L305.75 88.40 L310.19 21.00 L314.62 101.80 L319.06 81.25" fill="none" stroke="#f5ae42" stroke-width="2" stroke-linejoin="round" stroke-linecap="round"/></svg>
<div class="b" style="left:264px;top:375px;width:1223.5px;height:459px;overflow:hidden;border-radius:6px;background:#1e1e1e;box-shadow:0 0 0 0.6px #171717;">
</div>
<div class="b" style="left:264.00px;top:375.00px;width:1223.50px;height:38.00px;background:#242424;border-radius:0px;border-radius:6px 6px 0 0;box-shadow:0 0.5px 0 #1a1a1a;"></div>
<div class="t " style="left:288.50px;top:387.84px;font-size:12px;color:#b4b4b4;letter-spacing:0.55px;">Workflow</div>
<div class="t " style="left:464.00px;top:387.84px;font-size:12px;color:#b4b4b4;letter-spacing:0.4px;">Logs</div>
<div class="t " style="left:1380.00px;top:387.84px;font-size:12px;color:#b4b4b4;letter-spacing:0.05px;">Success Rate</div>
<div class="b" style="left:0;top:0;width:1512px;height:833px;overflow:hidden;">
<div class="b" style="left:264.00px;top:676.00px;width:1223.50px;height:44.00px;background:#282828;border-radius:0px;"></div>
<div class="b" style="left:288.00px;top:429.00px;width:10.00px;height:10.00px;background:#3b6cf6;border-radius:2.5px;"></div>
<div class="t " style="left:306.00px;top:428.13px;font-size:11.9px;color:#efefef;letter-spacing:0.28px;">exa-answer</div>
<div class="t " style="left:1380.00px;top:428.21px;font-size:11.8px;color:#efefef;letter-spacing:-0.6px;">73.1%</div>
<div class="b" style="left:464.00px;top:422.00px;width:10.31px;height:24.00px;background:#35c48e;border-radius:3px;"></div>
<div class="b" style="left:476.31px;top:422.00px;width:10.31px;height:24.00px;background:#35c48e;border-radius:3px;"></div>
<div class="b" style="left:488.61px;top:422.00px;width:10.31px;height:24.00px;background:#e36a6a;border-radius:3px;"></div>
<div class="b" style="left:500.92px;top:422.00px;width:10.31px;height:24.00px;background:#e36a6a;border-radius:3px;"></div>
<div class="b" style="left:513.22px;top:422.00px;width:10.31px;height:24.00px;background:#35c48e;border-radius:3px;"></div>
<div class="b" style="left:525.53px;top:422.00px;width:10.31px;height:24.00px;background:#35c48e;border-radius:3px;"></div>
<div class="b" style="left:537.83px;top:422.00px;width:10.31px;height:24.00px;background:#35c48e;border-radius:3px;"></div>
<div class="b" style="left:550.14px;top:422.00px;width:10.31px;height:24.00px;background:#35c48e;border-radius:3px;"></div>
<div class="b" style="left:562.44px;top:422.00px;width:10.31px;height:24.00px;background:#35c48e;border-radius:3px;"></div>
<div class="b" style="left:574.75px;top:422.00px;width:10.31px;height:24.00px;background:#35c48e;border-radius:3px;"></div>
<div class="b" style="left:587.06px;top:422.00px;width:10.31px;height:24.00px;background:#35c48e;border-radius:3px;"></div>
<div class="b" style="left:599.36px;top:422.00px;width:10.31px;height:24.00px;background:#35c48e;border-radius:3px;"></div>
<div class="b" style="left:611.67px;top:422.00px;width:10.31px;height:24.00px;background:#35c48e;border-radius:3px;"></div>
<div class="b" style="left:623.97px;top:422.00px;width:10.31px;height:24.00px;background:#35c48e;border-radius:3px;"></div>
<div class="b" style="left:636.28px;top:422.00px;width:10.31px;height:24.00px;background:#35c48e;border-radius:3px;"></div>
<div class="b" style="left:648.58px;top:422.00px;width:10.31px;height:24.00px;background:#e36a6a;border-radius:3px;"></div>
<div class="b" style="left:660.89px;top:422.00px;width:10.31px;height:24.00px;background:#e36a6a;border-radius:3px;"></div>
<div class="b" style="left:673.19px;top:422.00px;width:10.31px;height:24.00px;background:#e36a6a;border-radius:3px;"></div>
<div class="b" style="left:685.50px;top:422.00px;width:10.31px;height:24.00px;background:#35c48e;border-radius:3px;"></div>
<div class="b" style="left:697.81px;top:422.00px;width:10.31px;height:24.00px;background:#35c48e;border-radius:3px;"></div>
<div class="b" style="left:710.11px;top:422.00px;width:10.31px;height:24.00px;background:#35c48e;border-radius:3px;"></div>
<div class="b" style="left:722.42px;top:422.00px;width:10.31px;height:24.00px;background:#35c48e;border-radius:3px;"></div>
<div class="b" style="left:734.72px;top:422.00px;width:10.31px;height:24.00px;background:#e36a6a;border-radius:3px;"></div>
<div class="b" style="left:747.03px;top:422.00px;width:10.31px;height:24.00px;background:#35c48e;border-radius:3px;"></div>
<div class="b" style="left:759.33px;top:422.00px;width:10.31px;height:24.00px;background:#35c48e;border-radius:3px;"></div>
<div class="b" style="left:771.64px;top:422.00px;width:10.31px;height:24.00px;background:#35c48e;border-radius:3px;"></div>
<div class="b" style="left:783.94px;top:422.00px;width:10.31px;height:24.00px;background:#35c48e;border-radius:3px;"></div>
<div class="b" style="left:796.25px;top:422.00px;width:10.31px;height:24.00px;background:#35c48e;border-radius:3px;"></div>
<div class="b" style="left:808.56px;top:422.00px;width:10.31px;height:24.00px;background:#35c48e;border-radius:3px;"></div>
<div class="b" style="left:820.86px;top:422.00px;width:10.31px;height:24.00px;background:#35c48e;border-radius:3px;"></div>
<div class="b" style="left:833.17px;top:422.00px;width:10.31px;height:24.00px;background:#35c48e;border-radius:3px;"></div>
<div class="b" style="left:845.47px;top:422.00px;width:10.31px;height:24.00px;background:#35c48e;border-radius:3px;"></div>
<div class="b" style="left:857.78px;top:422.00px;width:10.31px;height:24.00px;background:#35c48e;border-radius:3px;"></div>
<div class="b" style="left:870.08px;top:422.00px;width:10.31px;height:24.00px;background:#35c48e;border-radius:3px;"></div>
<div class="b" style="left:882.39px;top:422.00px;width:10.31px;height:24.00px;background:#e36a6a;border-radius:3px;"></div>
<div class="b" style="left:894.69px;top:422.00px;width:10.31px;height:24.00px;background:#e36a6a;border-radius:3px;"></div>
<div class="b" style="left:907.00px;top:422.00px;width:10.31px;height:24.00px;background:#e36a6a;border-radius:3px;"></div>
<div class="b" style="left:919.31px;top:422.00px;width:10.31px;height:24.00px;background:#e36a6a;border-radius:3px;"></div>
<div class="b" style="left:931.61px;top:422.00px;width:10.31px;height:24.00px;background:#e36a6a;border-radius:3px;"></div>
<div class="b" style="left:943.92px;top:422.00px;width:10.31px;height:24.00px;background:#e36a6a;border-radius:3px;"></div>
<div class="b" style="left:956.22px;top:422.00px;width:10.31px;height:24.00px;background:#e36a6a;border-radius:3px;"></div>
<div class="b" style="left:968.53px;top:422.00px;width:10.31px;height:24.00px;background:#e36a6a;border-radius:3px;"></div>
<div class="b" style="left:980.83px;top:422.00px;width:10.31px;height:24.00px;background:#e36a6a;border-radius:3px;"></div>
<div class="b" style="left:993.14px;top:422.00px;width:10.31px;height:24.00px;background:#35c48e;border-radius:3px;"></div>
<div class="b" style="left:1005.44px;top:422.00px;width:10.31px;height:24.00px;background:#e36a6a;border-radius:3px;"></div>
<div class="b" style="left:1017.75px;top:422.00px;width:10.31px;height:24.00px;background:#35c48e;border-radius:3px;"></div>
<div class="b" style="left:1030.06px;top:422.00px;width:10.31px;height:24.00px;background:#e36a6a;border-radius:3px;"></div>
<div class="b" style="left:1042.36px;top:422.00px;width:10.31px;height:24.00px;background:#e36a6a;border-radius:3px;"></div>
<div class="b" style="left:1054.67px;top:422.00px;width:10.31px;height:24.00px;background:#e36a6a;border-radius:3px;"></div>
<div class="b" style="left:1066.97px;top:422.00px;width:10.31px;height:24.00px;background:#35c48e;border-radius:3px;"></div>
<div class="b" style="left:1079.28px;top:422.00px;width:10.31px;height:24.00px;background:#35c48e;border-radius:3px;"></div>
<div class="b" style="left:1091.58px;top:422.00px;width:10.31px;height:24.00px;background:#e36a6a;border-radius:3px;"></div>
<div class="b" style="left:1103.89px;top:422.00px;width:10.31px;height:24.00px;background:#e36a6a;border-radius:3px;"></div>
<div class="b" style="left:1116.19px;top:422.00px;width:10.31px;height:24.00px;background:#e36a6a;border-radius:3px;"></div>
<div class="b" style="left:1128.50px;top:422.00px;width:10.31px;height:24.00px;background:#e36a6a;border-radius:3px;"></div>
<div class="b" style="left:1140.81px;top:422.00px;width:10.31px;height:24.00px;background:#e36a6a;border-radius:3px;"></div>
<div class="b" style="left:1153.11px;top:422.00px;width:10.31px;height:24.00px;background:#e36a6a;border-radius:3px;"></div>
<div class="b" style="left:1165.42px;top:422.00px;width:10.31px;height:24.00px;background:#35c48e;border-radius:3px;"></div>
<div class="b" style="left:1177.72px;top:422.00px;width:10.31px;height:24.00px;background:#e36a6a;border-radius:3px;"></div>
<div class="b" style="left:1190.03px;top:422.00px;width:10.31px;height:24.00px;background:#e36a6a;border-radius:3px;"></div>
<div class="b" style="left:1202.33px;top:422.00px;width:10.31px;height:24.00px;background:#e36a6a;border-radius:3px;"></div>
<div class="b" style="left:1214.64px;top:422.00px;width:10.31px;height:24.00px;background:#e36a6a;border-radius:3px;"></div>
<div class="b" style="left:1226.94px;top:422.00px;width:10.31px;height:24.00px;background:#e36a6a;border-radius:3px;"></div>
<div class="b" style="left:1239.25px;top:422.00px;width:10.31px;height:24.00px;background:#e36a6a;border-radius:3px;"></div>
<div class="b" style="left:1251.56px;top:422.00px;width:10.31px;height:24.00px;background:#35c48e;border-radius:3px;"></div>
<div class="b" style="left:1263.86px;top:422.00px;width:10.31px;height:24.00px;background:#e36a6a;border-radius:3px;"></div>
<div class="b" style="left:1276.17px;top:422.00px;width:10.31px;height:24.00px;background:#35c48e;border-radius:3px;"></div>
<div class="b" style="left:1288.47px;top:422.00px;width:10.31px;height:24.00px;background:#e36a6a;border-radius:3px;"></div>
<div class="b" style="left:1300.78px;top:422.00px;width:10.31px;height:24.00px;background:rgba(255,255,255,0.138);border-radius:3px;"></div>
<div class="b" style="left:1313.08px;top:422.00px;width:10.31px;height:24.00px;background:#35c48e;border-radius:3px;"></div>
<div class="b" style="left:1325.39px;top:422.00px;width:10.31px;height:24.00px;background:rgba(255,255,255,0.138);border-radius:3px;"></div>
<div class="b" style="left:1337.69px;top:422.00px;width:10.31px;height:24.00px;background:#35c48e;border-radius:3px;"></div>
<div class="b" style="left:288.00px;top:473.00px;width:10.00px;height:10.00px;background:#f23c3c;border-radius:2.5px;"></div>
<div class="t " style="left:306.00px;top:472.13px;font-size:11.9px;color:#efefef;letter-spacing:0.28px;">exa-findSimilarLinks</div>
<div class="t " style="left:1380.00px;top:472.21px;font-size:11.8px;color:#efefef;letter-spacing:-0.6px;">71.4%</div>
<div class="b" style="left:464.00px;top:466.00px;width:10.31px;height:24.00px;background:#35c48e;border-radius:3px;"></div>
<div class="b" style="left:476.31px;top:466.00px;width:10.31px;height:24.00px;background:#35c48e;border-radius:3px;"></div>
<div class="b" style="left:488.61px;top:466.00px;width:10.31px;height:24.00px;background:#e36a6a;border-radius:3px;"></div>
<div class="b" style="left:500.92px;top:466.00px;width:10.31px;height:24.00px;background:#35c48e;border-radius:3px;"></div>
<div class="b" style="left:513.22px;top:466.00px;width:10.31px;height:24.00px;background:#35c48e;border-radius:3px;"></div>
<div class="b" style="left:525.53px;top:466.00px;width:10.31px;height:24.00px;background:#35c48e;border-radius:3px;"></div>
<div class="b" style="left:537.83px;top:466.00px;width:10.31px;height:24.00px;background:#e36a6a;border-radius:3px;"></div>
<div class="b" style="left:550.14px;top:466.00px;width:10.31px;height:24.00px;background:#e36a6a;border-radius:3px;"></div>
<div class="b" style="left:562.44px;top:466.00px;width:10.31px;height:24.00px;background:#35c48e;border-radius:3px;"></div>
<div class="b" style="left:574.75px;top:466.00px;width:10.31px;height:24.00px;background:#35c48e;border-radius:3px;"></div>
<div class="b" style="left:587.06px;top:466.00px;width:10.31px;height:24.00px;background:#e36a6a;border-radius:3px;"></div>
<div class="b" style="left:599.36px;top:466.00px;width:10.31px;height:24.00px;background:#e36a6a;border-radius:3px;"></div>
<div class="b" style="left:611.67px;top:466.00px;width:10.31px;height:24.00px;background:#e36a6a;border-radius:3px;"></div>
<div class="b" style="left:623.97px;top:466.00px;width:10.31px;height:24.00px;background:#35c48e;border-radius:3px;"></div>
<div class="b" style="left:636.28px;top:466.00px;width:10.31px;height:24.00px;background:#35c48e;border-radius:3px;"></div>
<div class="b" style="left:648.58px;top:466.00px;width:10.31px;height:24.00px;background:#35c48e;border-radius:3px;"></div>
<div class="b" style="left:660.89px;top:466.00px;width:10.31px;height:24.00px;background:#e36a6a;border-radius:3px;"></div>
<div class="b" style="left:673.19px;top:466.00px;width:10.31px;height:24.00px;background:#e36a6a;border-radius:3px;"></div>
<div class="b" style="left:685.50px;top:466.00px;width:10.31px;height:24.00px;background:#35c48e;border-radius:3px;"></div>
<div class="b" style="left:697.81px;top:466.00px;width:10.31px;height:24.00px;background:#35c48e;border-radius:3px;"></div>
<div class="b" style="left:710.11px;top:466.00px;width:10.31px;height:24.00px;background:#35c48e;border-radius:3px;"></div>
<div class="b" style="left:722.42px;top:466.00px;width:10.31px;height:24.00px;background:#35c48e;border-radius:3px;"></div>
<div class="b" style="left:734.72px;top:466.00px;width:10.31px;height:24.00px;background:#e36a6a;border-radius:3px;"></div>
<div class="b" style="left:747.03px;top:466.00px;width:10.31px;height:24.00px;background:#35c48e;border-radius:3px;"></div>
<div class="b" style="left:759.33px;top:466.00px;width:10.31px;height:24.00px;background:#35c48e;border-radius:3px;"></div>
<div class="b" style="left:771.64px;top:466.00px;width:10.31px;height:24.00px;background:#35c48e;border-radius:3px;"></div>
<div class="b" style="left:783.94px;top:466.00px;width:10.31px;height:24.00px;background:#e36a6a;border-radius:3px;"></div>
<div class="b" style="left:796.25px;top:466.00px;width:10.31px;height:24.00px;background:#35c48e;border-radius:3px;"></div>
<div class="b" style="left:808.56px;top:466.00px;width:10.31px;height:24.00px;background:#35c48e;border-radius:3px;"></div>
<div class="b" style="left:820.86px;top:466.00px;width:10.31px;height:24.00px;background:#35c48e;border-radius:3px;"></div>
<div class="b" style="left:833.17px;top:466.00px;width:10.31px;height:24.00px;background:#35c48e;border-radius:3px;"></div>
<div class="b" style="left:845.47px;top:466.00px;width:10.31px;height:24.00px;background:#e36a6a;border-radius:3px;"></div>
<div class="b" style="left:857.78px;top:466.00px;width:10.31px;height:24.00px;background:#35c48e;border-radius:3px;"></div>
<div class="b" style="left:870.08px;top:466.00px;width:10.31px;height:24.00px;background:#35c48e;border-radius:3px;"></div>
<div class="b" style="left:882.39px;top:466.00px;width:10.31px;height:24.00px;background:#e36a6a;border-radius:3px;"></div>
<div class="b" style="left:894.69px;top:466.00px;width:10.31px;height:24.00px;background:#e36a6a;border-radius:3px;"></div>
<div class="b" style="left:907.00px;top:466.00px;width:10.31px;height:24.00px;background:#e36a6a;border-radius:3px;"></div>
<div class="b" style="left:919.31px;top:466.00px;width:10.31px;height:24.00px;background:#e36a6a;border-radius:3px;"></div>
<div class="b" style="left:931.61px;top:466.00px;width:10.31px;height:24.00px;background:#e36a6a;border-radius:3px;"></div>
<div class="b" style="left:943.92px;top:466.00px;width:10.31px;height:24.00px;background:#e36a6a;border-radius:3px;"></div>
<div class="b" style="left:956.22px;top:466.00px;width:10.31px;height:24.00px;background:#35c48e;border-radius:3px;"></div>
<div class="b" style="left:968.53px;top:466.00px;width:10.31px;height:24.00px;background:#e36a6a;border-radius:3px;"></div>
<div class="b" style="left:980.83px;top:466.00px;width:10.31px;height:24.00px;background:#e36a6a;border-radius:3px;"></div>
<div class="b" style="left:993.14px;top:466.00px;width:10.31px;height:24.00px;background:#e36a6a;border-radius:3px;"></div>
<div class="b" style="left:1005.44px;top:466.00px;width:10.31px;height:24.00px;background:#e36a6a;border-radius:3px;"></div>
<div class="b" style="left:1017.75px;top:466.00px;width:10.31px;height:24.00px;background:#e36a6a;border-radius:3px;"></div>
<div class="b" style="left:1030.06px;top:466.00px;width:10.31px;height:24.00px;background:#e36a6a;border-radius:3px;"></div>
<div class="b" style="left:1042.36px;top:466.00px;width:10.31px;height:24.00px;background:#e36a6a;border-radius:3px;"></div>
<div class="b" style="left:1054.67px;top:466.00px;width:10.31px;height:24.00px;background:#e36a6a;border-radius:3px;"></div>
<div class="b" style="left:1066.97px;top:466.00px;width:10.31px;height:24.00px;background:#e36a6a;border-radius:3px;"></div>
<div class="b" style="left:1079.28px;top:466.00px;width:10.31px;height:24.00px;background:#35c48e;border-radius:3px;"></div>
<div class="b" style="left:1091.58px;top:466.00px;width:10.31px;height:24.00px;background:#e36a6a;border-radius:3px;"></div>
<div class="b" style="left:1103.89px;top:466.00px;width:10.31px;height:24.00px;background:#35c48e;border-radius:3px;"></div>
<div class="b" style="left:1116.19px;top:466.00px;width:10.31px;height:24.00px;background:#e36a6a;border-radius:3px;"></div>
<div class="b" style="left:1128.50px;top:466.00px;width:10.31px;height:24.00px;background:#35c48e;border-radius:3px;"></div>
<div class="b" style="left:1140.81px;top:466.00px;width:10.31px;height:24.00px;background:#35c48e;border-radius:3px;"></div>
<div class="b" style="left:1153.11px;top:466.00px;width:10.31px;height:24.00px;background:#e36a6a;border-radius:3px;"></div>
<div class="b" style="left:1165.42px;top:466.00px;width:10.31px;height:24.00px;background:#e36a6a;border-radius:3px;"></div>
<div class="b" style="left:1177.72px;top:466.00px;width:10.31px;height:24.00px;background:#e36a6a;border-radius:3px;"></div>
<div class="b" style="left:1190.03px;top:466.00px;width:10.31px;height:24.00px;background:#35c48e;border-radius:3px;"></div>
<div class="b" style="left:1202.33px;top:466.00px;width:10.31px;height:24.00px;background:#e36a6a;border-radius:3px;"></div>
<div class="b" style="left:1214.64px;top:466.00px;width:10.31px;height:24.00px;background:#35c48e;border-radius:3px;"></div>
<div class="b" style="left:1226.94px;top:466.00px;width:10.31px;height:24.00px;background:#e36a6a;border-radius:3px;"></div>
<div class="b" style="left:1239.25px;top:466.00px;width:10.31px;height:24.00px;background:#e36a6a;border-radius:3px;"></div>
<div class="b" style="left:1251.56px;top:466.00px;width:10.31px;height:24.00px;background:#e36a6a;border-radius:3px;"></div>
<div class="b" style="left:1263.86px;top:466.00px;width:10.31px;height:24.00px;background:#35c48e;border-radius:3px;"></div>
<div class="b" style="left:1276.17px;top:466.00px;width:10.31px;height:24.00px;background:#e36a6a;border-radius:3px;"></div>
<div class="b" style="left:1288.47px;top:466.00px;width:10.31px;height:24.00px;background:#35c48e;border-radius:3px;"></div>
<div class="b" style="left:1300.78px;top:466.00px;width:10.31px;height:24.00px;background:rgba(255,255,255,0.138);border-radius:3px;"></div>
<div class="b" style="left:1313.08px;top:466.00px;width:10.31px;height:24.00px;background:#35c48e;border-radius:3px;"></div>
<div class="b" style="left:1325.39px;top:466.00px;width:10.31px;height:24.00px;background:rgba(255,255,255,0.138);border-radius:3px;"></div>
<div class="b" style="left:1337.69px;top:466.00px;width:10.31px;height:24.00px;background:#35c48e;border-radius:3px;"></div>
<div class="b" style="left:288.00px;top:517.00px;width:10.00px;height:10.00px;background:#f23c3c;border-radius:2.5px;"></div>
<div class="t " style="left:306.00px;top:516.13px;font-size:11.9px;color:#efefef;letter-spacing:0.28px;">exa-getContent</div>
<div class="t " style="left:1380.00px;top:516.21px;font-size:11.8px;color:#efefef;letter-spacing:-0.3px;">70.6%</div>
<div class="b" style="left:464.00px;top:510.00px;width:10.31px;height:24.00px;background:#35c48e;border-radius:3px;"></div>
<div class="b" style="left:476.31px;top:510.00px;width:10.31px;height:24.00px;background:#35c48e;border-radius:3px;"></div>
<div class="b" style="left:488.61px;top:510.00px;width:10.31px;height:24.00px;background:#35c48e;border-radius:3px;"></div>
<div class="b" style="left:500.92px;top:510.00px;width:10.31px;height:24.00px;background:#35c48e;border-radius:3px;"></div>
<div class="b" style="left:513.22px;top:510.00px;width:10.31px;height:24.00px;background:#35c48e;border-radius:3px;"></div>
<div class="b" style="left:525.53px;top:510.00px;width:10.31px;height:24.00px;background:#35c48e;border-radius:3px;"></div>
<div class="b" style="left:537.83px;top:510.00px;width:10.31px;height:24.00px;background:#35c48e;border-radius:3px;"></div>
<div class="b" style="left:550.14px;top:510.00px;width:10.31px;height:24.00px;background:#35c48e;border-radius:3px;"></div>
<div class="b" style="left:562.44px;top:510.00px;width:10.31px;height:24.00px;background:#35c48e;border-radius:3px;"></div>
<div class="b" style="left:574.75px;top:510.00px;width:10.31px;height:24.00px;background:#35c48e;border-radius:3px;"></div>
<div class="b" style="left:587.06px;top:510.00px;width:10.31px;height:24.00px;background:#e36a6a;border-radius:3px;"></div>
<div class="b" style="left:599.36px;top:510.00px;width:10.31px;height:24.00px;background:#35c48e;border-radius:3px;"></div>
<div class="b" style="left:611.67px;top:510.00px;width:10.31px;height:24.00px;background:#e36a6a;border-radius:3px;"></div>
<div class="b" style="left:623.97px;top:510.00px;width:10.31px;height:24.00px;background:#35c48e;border-radius:3px;"></div>
<div class="b" style="left:636.28px;top:510.00px;width:10.31px;height:24.00px;background:#35c48e;border-radius:3px;"></div>
<div class="b" style="left:648.58px;top:510.00px;width:10.31px;height:24.00px;background:#35c48e;border-radius:3px;"></div>
<div class="b" style="left:660.89px;top:510.00px;width:10.31px;height:24.00px;background:#35c48e;border-radius:3px;"></div>
<div class="b" style="left:673.19px;top:510.00px;width:10.31px;height:24.00px;background:#e36a6a;border-radius:3px;"></div>
<div class="b" style="left:685.50px;top:510.00px;width:10.31px;height:24.00px;background:#35c48e;border-radius:3px;"></div>
<div class="b" style="left:697.81px;top:510.00px;width:10.31px;height:24.00px;background:#35c48e;border-radius:3px;"></div>
<div class="b" style="left:710.11px;top:510.00px;width:10.31px;height:24.00px;background:#35c48e;border-radius:3px;"></div>
<div class="b" style="left:722.42px;top:510.00px;width:10.31px;height:24.00px;background:#35c48e;border-radius:3px;"></div>
<div class="b" style="left:734.72px;top:510.00px;width:10.31px;height:24.00px;background:#35c48e;border-radius:3px;"></div>
<div class="b" style="left:747.03px;top:510.00px;width:10.31px;height:24.00px;background:#35c48e;border-radius:3px;"></div>
<div class="b" style="left:759.33px;top:510.00px;width:10.31px;height:24.00px;background:#35c48e;border-radius:3px;"></div>
<div class="b" style="left:771.64px;top:510.00px;width:10.31px;height:24.00px;background:#35c48e;border-radius:3px;"></div>
<div class="b" style="left:783.94px;top:510.00px;width:10.31px;height:24.00px;background:#35c48e;border-radius:3px;"></div>
<div class="b" style="left:796.25px;top:510.00px;width:10.31px;height:24.00px;background:#35c48e;border-radius:3px;"></div>
<div class="b" style="left:808.56px;top:510.00px;width:10.31px;height:24.00px;background:#35c48e;border-radius:3px;"></div>
<div class="b" style="left:820.86px;top:510.00px;width:10.31px;height:24.00px;background:#e36a6a;border-radius:3px;"></div>
<div class="b" style="left:833.17px;top:510.00px;width:10.31px;height:24.00px;background:#35c48e;border-radius:3px;"></div>
<div class="b" style="left:845.47px;top:510.00px;width:10.31px;height:24.00px;background:#e36a6a;border-radius:3px;"></div>
<div class="b" style="left:857.78px;top:510.00px;width:10.31px;height:24.00px;background:#35c48e;border-radius:3px;"></div>
<div class="b" style="left:870.08px;top:510.00px;width:10.31px;height:24.00px;background:#35c48e;border-radius:3px;"></div>
<div class="b" style="left:882.39px;top:510.00px;width:10.31px;height:24.00px;background:#e36a6a;border-radius:3px;"></div>
<div class="b" style="left:894.69px;top:510.00px;width:10.31px;height:24.00px;background:#e36a6a;border-radius:3px;"></div>
<div class="b" style="left:907.00px;top:510.00px;width:10.31px;height:24.00px;background:#e36a6a;border-radius:3px;"></div>
<div class="b" style="left:919.31px;top:510.00px;width:10.31px;height:24.00px;background:#35c48e;border-radius:3px;"></div>
<div class="b" style="left:931.61px;top:510.00px;width:10.31px;height:24.00px;background:#35c48e;border-radius:3px;"></div>
<div class="b" style="left:943.92px;top:510.00px;width:10.31px;height:24.00px;background:#35c48e;border-radius:3px;"></div>
<div class="b" style="left:956.22px;top:510.00px;width:10.31px;height:24.00px;background:#e36a6a;border-radius:3px;"></div>
<div class="b" style="left:968.53px;top:510.00px;width:10.31px;height:24.00px;background:#e36a6a;border-radius:3px;"></div>
<div class="b" style="left:980.83px;top:510.00px;width:10.31px;height:24.00px;background:#e36a6a;border-radius:3px;"></div>
<div class="b" style="left:993.14px;top:510.00px;width:10.31px;height:24.00px;background:#e36a6a;border-radius:3px;"></div>
<div class="b" style="left:1005.44px;top:510.00px;width:10.31px;height:24.00px;background:#e36a6a;border-radius:3px;"></div>
<div class="b" style="left:1017.75px;top:510.00px;width:10.31px;height:24.00px;background:#e36a6a;border-radius:3px;"></div>
<div class="b" style="left:1030.06px;top:510.00px;width:10.31px;height:24.00px;background:#e36a6a;border-radius:3px;"></div>
<div class="b" style="left:1042.36px;top:510.00px;width:10.31px;height:24.00px;background:#35c48e;border-radius:3px;"></div>
<div class="b" style="left:1054.67px;top:510.00px;width:10.31px;height:24.00px;background:#e36a6a;border-radius:3px;"></div>
<div class="b" style="left:1066.97px;top:510.00px;width:10.31px;height:24.00px;background:#e36a6a;border-radius:3px;"></div>
<div class="b" style="left:1079.28px;top:510.00px;width:10.31px;height:24.00px;background:#e36a6a;border-radius:3px;"></div>
<div class="b" style="left:1091.58px;top:510.00px;width:10.31px;height:24.00px;background:#e36a6a;border-radius:3px;"></div>
<div class="b" style="left:1103.89px;top:510.00px;width:10.31px;height:24.00px;background:#35c48e;border-radius:3px;"></div>
<div class="b" style="left:1116.19px;top:510.00px;width:10.31px;height:24.00px;background:#e36a6a;border-radius:3px;"></div>
<div class="b" style="left:1128.50px;top:510.00px;width:10.31px;height:24.00px;background:#e36a6a;border-radius:3px;"></div>
<div class="b" style="left:1140.81px;top:510.00px;width:10.31px;height:24.00px;background:#e36a6a;border-radius:3px;"></div>
<div class="b" style="left:1153.11px;top:510.00px;width:10.31px;height:24.00px;background:#e36a6a;border-radius:3px;"></div>
<div class="b" style="left:1165.42px;top:510.00px;width:10.31px;height:24.00px;background:#e36a6a;border-radius:3px;"></div>
<div class="b" style="left:1177.72px;top:510.00px;width:10.31px;height:24.00px;background:#e36a6a;border-radius:3px;"></div>
<div class="b" style="left:1190.03px;top:510.00px;width:10.31px;height:24.00px;background:#35c48e;border-radius:3px;"></div>
<div class="b" style="left:1202.33px;top:510.00px;width:10.31px;height:24.00px;background:#e36a6a;border-radius:3px;"></div>
<div class="b" style="left:1214.64px;top:510.00px;width:10.31px;height:24.00px;background:#e36a6a;border-radius:3px;"></div>
<div class="b" style="left:1226.94px;top:510.00px;width:10.31px;height:24.00px;background:#e36a6a;border-radius:3px;"></div>
<div class="b" style="left:1239.25px;top:510.00px;width:10.31px;height:24.00px;background:#e36a6a;border-radius:3px;"></div>
<div class="b" style="left:1251.56px;top:510.00px;width:10.31px;height:24.00px;background:#e36a6a;border-radius:3px;"></div>
<div class="b" style="left:1263.86px;top:510.00px;width:10.31px;height:24.00px;background:#e36a6a;border-radius:3px;"></div>
<div class="b" style="left:1276.17px;top:510.00px;width:10.31px;height:24.00px;background:#e36a6a;border-radius:3px;"></div>
<div class="b" style="left:1288.47px;top:510.00px;width:10.31px;height:24.00px;background:#e36a6a;border-radius:3px;"></div>
<div class="b" style="left:1300.78px;top:510.00px;width:10.31px;height:24.00px;background:rgba(255,255,255,0.138);border-radius:3px;"></div>
<div class="b" style="left:1313.08px;top:510.00px;width:10.31px;height:24.00px;background:#35c48e;border-radius:3px;"></div>
<div class="b" style="left:1325.39px;top:510.00px;width:10.31px;height:24.00px;background:#35c48e;border-radius:3px;"></div>
<div class="b" style="left:1337.69px;top:510.00px;width:10.31px;height:24.00px;background:#35c48e;border-radius:3px;"></div>
<div class="b" style="left:288.00px;top:561.00px;width:10.00px;height:10.00px;background:#f23c3c;border-radius:2.5px;"></div>
<div class="t " style="left:306.00px;top:560.13px;font-size:11.9px;color:#efefef;letter-spacing:0.28px;">exa-search</div>
<div class="t " style="left:1380.00px;top:560.21px;font-size:11.8px;color:#efefef;letter-spacing:-0.6px;">71.0%</div>
<div class="b" style="left:464.00px;top:554.00px;width:10.31px;height:24.00px;background:#35c48e;border-radius:3px;"></div>
<div class="b" style="left:476.31px;top:554.00px;width:10.31px;height:24.00px;background:#35c48e;border-radius:3px;"></div>
<div class="b" style="left:488.61px;top:554.00px;width:10.31px;height:24.00px;background:#35c48e;border-radius:3px;"></div>
<div class="b" style="left:500.92px;top:554.00px;width:10.31px;height:24.00px;background:#35c48e;border-radius:3px;"></div>
<div class="b" style="left:513.22px;top:554.00px;width:10.31px;height:24.00px;background:#35c48e;border-radius:3px;"></div>
<div class="b" style="left:525.53px;top:554.00px;width:10.31px;height:24.00px;background:#35c48e;border-radius:3px;"></div>
<div class="b" style="left:537.83px;top:554.00px;width:10.31px;height:24.00px;background:#e36a6a;border-radius:3px;"></div>
<div class="b" style="left:550.14px;top:554.00px;width:10.31px;height:24.00px;background:#35c48e;border-radius:3px;"></div>
<div class="b" style="left:562.44px;top:554.00px;width:10.31px;height:24.00px;background:#35c48e;border-radius:3px;"></div>
<div class="b" style="left:574.75px;top:554.00px;width:10.31px;height:24.00px;background:#e36a6a;border-radius:3px;"></div>
<div class="b" style="left:587.06px;top:554.00px;width:10.31px;height:24.00px;background:#e36a6a;border-radius:3px;"></div>
<div class="b" style="left:599.36px;top:554.00px;width:10.31px;height:24.00px;background:#e36a6a;border-radius:3px;"></div>
<div class="b" style="left:611.67px;top:554.00px;width:10.31px;height:24.00px;background:#35c48e;border-radius:3px;"></div>
<div class="b" style="left:623.97px;top:554.00px;width:10.31px;height:24.00px;background:#e36a6a;border-radius:3px;"></div>
<div class="b" style="left:636.28px;top:554.00px;width:10.31px;height:24.00px;background:#e36a6a;border-radius:3px;"></div>
<div class="b" style="left:648.58px;top:554.00px;width:10.31px;height:24.00px;background:#35c48e;border-radius:3px;"></div>
<div class="b" style="left:660.89px;top:554.00px;width:10.31px;height:24.00px;background:#e36a6a;border-radius:3px;"></div>
<div class="b" style="left:673.19px;top:554.00px;width:10.31px;height:24.00px;background:#e36a6a;border-radius:3px;"></div>
<div class="b" style="left:685.50px;top:554.00px;width:10.31px;height:24.00px;background:#35c48e;border-radius:3px;"></div>
<div class="b" style="left:697.81px;top:554.00px;width:10.31px;height:24.00px;background:#35c48e;border-radius:3px;"></div>
<div class="b" style="left:710.11px;top:554.00px;width:10.31px;height:24.00px;background:#35c48e;border-radius:3px;"></div>
<div class="b" style="left:722.42px;top:554.00px;width:10.31px;height:24.00px;background:#35c48e;border-radius:3px;"></div>
<div class="b" style="left:734.72px;top:554.00px;width:10.31px;height:24.00px;background:#35c48e;border-radius:3px;"></div>
<div class="b" style="left:747.03px;top:554.00px;width:10.31px;height:24.00px;background:#35c48e;border-radius:3px;"></div>
<div class="b" style="left:759.33px;top:554.00px;width:10.31px;height:24.00px;background:#e36a6a;border-radius:3px;"></div>
<div class="b" style="left:771.64px;top:554.00px;width:10.31px;height:24.00px;background:#35c48e;border-radius:3px;"></div>
<div class="b" style="left:783.94px;top:554.00px;width:10.31px;height:24.00px;background:#e36a6a;border-radius:3px;"></div>
<div class="b" style="left:796.25px;top:554.00px;width:10.31px;height:24.00px;background:#35c48e;border-radius:3px;"></div>
<div class="b" style="left:808.56px;top:554.00px;width:10.31px;height:24.00px;background:#35c48e;border-radius:3px;"></div>
<div class="b" style="left:820.86px;top:554.00px;width:10.31px;height:24.00px;background:#e36a6a;border-radius:3px;"></div>
<div class="b" style="left:833.17px;top:554.00px;width:10.31px;height:24.00px;background:#35c48e;border-radius:3px;"></div>
<div class="b" style="left:845.47px;top:554.00px;width:10.31px;height:24.00px;background:#35c48e;border-radius:3px;"></div>
<div class="b" style="left:857.78px;top:554.00px;width:10.31px;height:24.00px;background:#35c48e;border-radius:3px;"></div>
<div class="b" style="left:870.08px;top:554.00px;width:10.31px;height:24.00px;background:#35c48e;border-radius:3px;"></div>
<div class="b" style="left:882.39px;top:554.00px;width:10.31px;height:24.00px;background:#e36a6a;border-radius:3px;"></div>
<div class="b" style="left:894.69px;top:554.00px;width:10.31px;height:24.00px;background:#e36a6a;border-radius:3px;"></div>
<div class="b" style="left:907.00px;top:554.00px;width:10.31px;height:24.00px;background:#e36a6a;border-radius:3px;"></div>
<div class="b" style="left:919.31px;top:554.00px;width:10.31px;height:24.00px;background:#e36a6a;border-radius:3px;"></div>
<div class="b" style="left:931.61px;top:554.00px;width:10.31px;height:24.00px;background:#35c48e;border-radius:3px;"></div>
<div class="b" style="left:943.92px;top:554.00px;width:10.31px;height:24.00px;background:#e36a6a;border-radius:3px;"></div>
<div class="b" style="left:956.22px;top:554.00px;width:10.31px;height:24.00px;background:#35c48e;border-radius:3px;"></div>
<div class="b" style="left:968.53px;top:554.00px;width:10.31px;height:24.00px;background:#e36a6a;border-radius:3px;"></div>
<div class="b" style="left:980.83px;top:554.00px;width:10.31px;height:24.00px;background:#e36a6a;border-radius:3px;"></div>
<div class="b" style="left:993.14px;top:554.00px;width:10.31px;height:24.00px;background:#e36a6a;border-radius:3px;"></div>
<div class="b" style="left:1005.44px;top:554.00px;width:10.31px;height:24.00px;background:#35c48e;border-radius:3px;"></div>
<div class="b" style="left:1017.75px;top:554.00px;width:10.31px;height:24.00px;background:#e36a6a;border-radius:3px;"></div>
<div class="b" style="left:1030.06px;top:554.00px;width:10.31px;height:24.00px;background:#e36a6a;border-radius:3px;"></div>
<div class="b" style="left:1042.36px;top:554.00px;width:10.31px;height:24.00px;background:#e36a6a;border-radius:3px;"></div>
<div class="b" style="left:1054.67px;top:554.00px;width:10.31px;height:24.00px;background:#e36a6a;border-radius:3px;"></div>
<div class="b" style="left:1066.97px;top:554.00px;width:10.31px;height:24.00px;background:#e36a6a;border-radius:3px;"></div>
<div class="b" style="left:1079.28px;top:554.00px;width:10.31px;height:24.00px;background:#e36a6a;border-radius:3px;"></div>
<div class="b" style="left:1091.58px;top:554.00px;width:10.31px;height:24.00px;background:#e36a6a;border-radius:3px;"></div>
<div class="b" style="left:1103.89px;top:554.00px;width:10.31px;height:24.00px;background:#35c48e;border-radius:3px;"></div>
<div class="b" style="left:1116.19px;top:554.00px;width:10.31px;height:24.00px;background:#e36a6a;border-radius:3px;"></div>
<div class="b" style="left:1128.50px;top:554.00px;width:10.31px;height:24.00px;background:#e36a6a;border-radius:3px;"></div>
<div class="b" style="left:1140.81px;top:554.00px;width:10.31px;height:24.00px;background:#e36a6a;border-radius:3px;"></div>
<div class="b" style="left:1153.11px;top:554.00px;width:10.31px;height:24.00px;background:#35c48e;border-radius:3px;"></div>
<div class="b" style="left:1165.42px;top:554.00px;width:10.31px;height:24.00px;background:#e36a6a;border-radius:3px;"></div>
<div class="b" style="left:1177.72px;top:554.00px;width:10.31px;height:24.00px;background:#35c48e;border-radius:3px;"></div>
<div class="b" style="left:1190.03px;top:554.00px;width:10.31px;height:24.00px;background:#35c48e;border-radius:3px;"></div>
<div class="b" style="left:1202.33px;top:554.00px;width:10.31px;height:24.00px;background:#e36a6a;border-radius:3px;"></div>
<div class="b" style="left:1214.64px;top:554.00px;width:10.31px;height:24.00px;background:#35c48e;border-radius:3px;"></div>
<div class="b" style="left:1226.94px;top:554.00px;width:10.31px;height:24.00px;background:#e36a6a;border-radius:3px;"></div>
<div class="b" style="left:1239.25px;top:554.00px;width:10.31px;height:24.00px;background:#35c48e;border-radius:3px;"></div>
<div class="b" style="left:1251.56px;top:554.00px;width:10.31px;height:24.00px;background:#35c48e;border-radius:3px;"></div>
<div class="b" style="left:1263.86px;top:554.00px;width:10.31px;height:24.00px;background:#35c48e;border-radius:3px;"></div>
<div class="b" style="left:1276.17px;top:554.00px;width:10.31px;height:24.00px;background:#e36a6a;border-radius:3px;"></div>
<div class="b" style="left:1288.47px;top:554.00px;width:10.31px;height:24.00px;background:#e36a6a;border-radius:3px;"></div>
<div class="b" style="left:1300.78px;top:554.00px;width:10.31px;height:24.00px;background:rgba(255,255,255,0.138);border-radius:3px;"></div>
<div class="b" style="left:1313.08px;top:554.00px;width:10.31px;height:24.00px;background:rgba(255,255,255,0.138);border-radius:3px;"></div>
<div class="b" style="left:1325.39px;top:554.00px;width:10.31px;height:24.00px;background:#e36a6a;border-radius:3px;"></div>
<div class="b" style="left:1337.69px;top:554.00px;width:10.31px;height:24.00px;background:#35c48e;border-radius:3px;"></div>
<div class="b" style="left:288.00px;top:605.00px;width:10.00px;height:10.00px;background:#f23c3c;border-radius:2.5px;"></div>
<div class="t " style="left:306.00px;top:604.13px;font-size:11.9px;color:#efefef;letter-spacing:0.28px;">embeddings</div>
<div class="t " style="left:1380.00px;top:604.21px;font-size:11.8px;color:#efefef;letter-spacing:-0.3px;">44.3%</div>
<div class="b" style="left:464.00px;top:598.00px;width:10.31px;height:24.00px;background:#35c48e;border-radius:3px;"></div>
<div class="b" style="left:476.31px;top:598.00px;width:10.31px;height:24.00px;background:rgba(255,255,255,0.138);border-radius:3px;"></div>
<div class="b" style="left:488.61px;top:598.00px;width:10.31px;height:24.00px;background:#35c48e;border-radius:3px;"></div>
<div class="b" style="left:500.92px;top:598.00px;width:10.31px;height:24.00px;background:rgba(255,255,255,0.138);border-radius:3px;"></div>
<div class="b" style="left:513.22px;top:598.00px;width:10.31px;height:24.00px;background:rgba(255,255,255,0.138);border-radius:3px;"></div>
<div class="b" style="left:525.53px;top:598.00px;width:10.31px;height:24.00px;background:#e36a6a;border-radius:3px;"></div>
<div class="b" style="left:537.83px;top:598.00px;width:10.31px;height:24.00px;background:rgba(255,255,255,0.138);border-radius:3px;"></div>
<div class="b" style="left:550.14px;top:598.00px;width:10.31px;height:24.00px;background:#35c48e;border-radius:3px;"></div>
<div class="b" style="left:562.44px;top:598.00px;width:10.31px;height:24.00px;background:rgba(255,255,255,0.138);border-radius:3px;"></div>
<div class="b" style="left:574.75px;top:598.00px;width:10.31px;height:24.00px;background:rgba(255,255,255,0.138);border-radius:3px;"></div>
<div class="b" style="left:587.06px;top:598.00px;width:10.31px;height:24.00px;background:#e36a6a;border-radius:3px;"></div>
<div class="b" style="left:599.36px;top:598.00px;width:10.31px;height:24.00px;background:rgba(255,255,255,0.138);border-radius:3px;"></div>
<div class="b" style="left:611.67px;top:598.00px;width:10.31px;height:24.00px;background:#e36a6a;border-radius:3px;"></div>
<div class="b" style="left:623.97px;top:598.00px;width:10.31px;height:24.00px;background:rgba(255,255,255,0.138);border-radius:3px;"></div>
<div class="b" style="left:636.28px;top:598.00px;width:10.31px;height:24.00px;background:#e36a6a;border-radius:3px;"></div>
<div class="b" style="left:648.58px;top:598.00px;width:10.31px;height:24.00px;background:rgba(255,255,255,0.138);border-radius:3px;"></div>
<div class="b" style="left:660.89px;top:598.00px;width:10.31px;height:24.00px;background:rgba(255,255,255,0.138);border-radius:3px;"></div>
<div class="b" style="left:673.19px;top:598.00px;width:10.31px;height:24.00px;background:#e36a6a;border-radius:3px;"></div>
<div class="b" style="left:685.50px;top:598.00px;width:10.31px;height:24.00px;background:rgba(255,255,255,0.138);border-radius:3px;"></div>
<div class="b" style="left:697.81px;top:598.00px;width:10.31px;height:24.00px;background:#35c48e;border-radius:3px;"></div>
<div class="b" style="left:710.11px;top:598.00px;width:10.31px;height:24.00px;background:rgba(255,255,255,0.138);border-radius:3px;"></div>
<div class="b" style="left:722.42px;top:598.00px;width:10.31px;height:24.00px;background:rgba(255,255,255,0.138);border-radius:3px;"></div>
<div class="b" style="left:734.72px;top:598.00px;width:10.31px;height:24.00px;background:#e36a6a;border-radius:3px;"></div>
<div class="b" style="left:747.03px;top:598.00px;width:10.31px;height:24.00px;background:rgba(255,255,255,0.138);border-radius:3px;"></div>
<div class="b" style="left:759.33px;top:598.00px;width:10.31px;height:24.00px;background:#35c48e;border-radius:3px;"></div>
<div class="b" style="left:771.64px;top:598.00px;width:10.31px;height:24.00px;background:rgba(255,255,255,0.138);border-radius:3px;"></div>
<div class="b" style="left:783.94px;top:598.00px;width:10.31px;height:24.00px;background:#35c48e;border-radius:3px;"></div>
<div class="b" style="left:796.25px;top:598.00px;width:10.31px;height:24.00px;background:rgba(255,255,255,0.138);border-radius:3px;"></div>
<div class="b" style="left:808.56px;top:598.00px;width:10.31px;height:24.00px;background:rgba(255,255,255,0.138);border-radius:3px;"></div>
<div class="b" style="left:820.86px;top:598.00px;width:10.31px;height:24.00px;background:#e36a6a;border-radius:3px;"></div>
<div class="b" style="left:833.17px;top:598.00px;width:10.31px;height:24.00px;background:rgba(255,255,255,0.138);border-radius:3px;"></div>
<div class="b" style="left:845.47px;top:598.00px;width:10.31px;height:24.00px;background:#35c48e;border-radius:3px;"></div>
<div class="b" style="left:857.78px;top:598.00px;width:10.31px;height:24.00px;background:rgba(255,255,255,0.138);border-radius:3px;"></div>
<div class="b" style="left:870.08px;top:598.00px;width:10.31px;height:24.00px;background:rgba(255,255,255,0.138);border-radius:3px;"></div>
<div class="b" style="left:882.39px;top:598.00px;width:10.31px;height:24.00px;background:#e36a6a;border-radius:3px;"></div>
<div class="b" style="left:894.69px;top:598.00px;width:10.31px;height:24.00px;background:rgba(255,255,255,0.138);border-radius:3px;"></div>
<div class="b" style="left:907.00px;top:598.00px;width:10.31px;height:24.00px;background:#e36a6a;border-radius:3px;"></div>
<div class="b" style="left:919.31px;top:598.00px;width:10.31px;height:24.00px;background:rgba(255,255,255,0.138);border-radius:3px;"></div>
<div class="b" style="left:931.61px;top:598.00px;width:10.31px;height:24.00px;background:#35c48e;border-radius:3px;"></div>
<div class="b" style="left:943.92px;top:598.00px;width:10.31px;height:24.00px;background:rgba(255,255,255,0.138);border-radius:3px;"></div>
<div class="b" style="left:956.22px;top:598.00px;width:10.31px;height:24.00px;background:rgba(255,255,255,0.138);border-radius:3px;"></div>
<div class="b" style="left:968.53px;top:598.00px;width:10.31px;height:24.00px;background:#e36a6a;border-radius:3px;"></div>
<div class="b" style="left:980.83px;top:598.00px;width:10.31px;height:24.00px;background:rgba(255,255,255,0.138);border-radius:3px;"></div>
<div class="b" style="left:993.14px;top:598.00px;width:10.31px;height:24.00px;background:#35c48e;border-radius:3px;"></div>
<div class="b" style="left:1005.44px;top:598.00px;width:10.31px;height:24.00px;background:rgba(255,255,255,0.138);border-radius:3px;"></div>
<div class="b" style="left:1017.75px;top:598.00px;width:10.31px;height:24.00px;background:rgba(255,255,255,0.138);border-radius:3px;"></div>
<div class="b" style="left:1030.06px;top:598.00px;width:10.31px;height:24.00px;background:#e36a6a;border-radius:3px;"></div>
<div class="b" style="left:1042.36px;top:598.00px;width:10.31px;height:24.00px;background:rgba(255,255,255,0.138);border-radius:3px;"></div>
<div class="b" style="left:1054.67px;top:598.00px;width:10.31px;height:24.00px;background:#e36a6a;border-radius:3px;"></div>
<div class="b" style="left:1066.97px;top:598.00px;width:10.31px;height:24.00px;background:rgba(255,255,255,0.138);border-radius:3px;"></div>
<div class="b" style="left:1079.28px;top:598.00px;width:10.31px;height:24.00px;background:#e36a6a;border-radius:3px;"></div>
<div class="b" style="left:1091.58px;top:598.00px;width:10.31px;height:24.00px;background:rgba(255,255,255,0.138);border-radius:3px;"></div>
<div class="b" style="left:1103.89px;top:598.00px;width:10.31px;height:24.00px;background:rgba(255,255,255,0.138);border-radius:3px;"></div>
<div class="b" style="left:1116.19px;top:598.00px;width:10.31px;height:24.00px;background:#e36a6a;border-radius:3px;"></div>
<div class="b" style="left:1128.50px;top:598.00px;width:10.31px;height:24.00px;background:rgba(255,255,255,0.138);border-radius:3px;"></div>
<div class="b" style="left:1140.81px;top:598.00px;width:10.31px;height:24.00px;background:#e36a6a;border-radius:3px;"></div>
<div class="b" style="left:1153.11px;top:598.00px;width:10.31px;height:24.00px;background:rgba(255,255,255,0.138);border-radius:3px;"></div>
<div class="b" style="left:1165.42px;top:598.00px;width:10.31px;height:24.00px;background:rgba(255,255,255,0.138);border-radius:3px;"></div>
<div class="b" style="left:1177.72px;top:598.00px;width:10.31px;height:24.00px;background:#e36a6a;border-radius:3px;"></div>
<div class="b" style="left:1190.03px;top:598.00px;width:10.31px;height:24.00px;background:rgba(255,255,255,0.138);border-radius:3px;"></div>
<div class="b" style="left:1202.33px;top:598.00px;width:10.31px;height:24.00px;background:#e36a6a;border-radius:3px;"></div>
<div class="b" style="left:1214.64px;top:598.00px;width:10.31px;height:24.00px;background:rgba(255,255,255,0.138);border-radius:3px;"></div>
<div class="b" style="left:1226.94px;top:598.00px;width:10.31px;height:24.00px;background:#e36a6a;border-radius:3px;"></div>
<div class="b" style="left:1239.25px;top:598.00px;width:10.31px;height:24.00px;background:rgba(255,255,255,0.138);border-radius:3px;"></div>
<div class="b" style="left:1251.56px;top:598.00px;width:10.31px;height:24.00px;background:rgba(255,255,255,0.138);border-radius:3px;"></div>
<div class="b" style="left:1263.86px;top:598.00px;width:10.31px;height:24.00px;background:#e36a6a;border-radius:3px;"></div>
<div class="b" style="left:1276.17px;top:598.00px;width:10.31px;height:24.00px;background:rgba(255,255,255,0.138);border-radius:3px;"></div>
<div class="b" style="left:1288.47px;top:598.00px;width:10.31px;height:24.00px;background:#35c48e;border-radius:3px;"></div>
<div class="b" style="left:1300.78px;top:598.00px;width:10.31px;height:24.00px;background:rgba(255,255,255,0.138);border-radius:3px;"></div>
<div class="b" style="left:1313.08px;top:598.00px;width:10.31px;height:24.00px;background:rgba(255,255,255,0.138);border-radius:3px;"></div>
<div class="b" style="left:1325.39px;top:598.00px;width:10.31px;height:24.00px;background:#35c48e;border-radius:3px;"></div>
<div class="b" style="left:1337.69px;top:598.00px;width:10.31px;height:24.00px;background:rgba(255,255,255,0.138);border-radius:3px;"></div>
<div class="b" style="left:288.00px;top:649.00px;width:10.00px;height:10.00px;background:#f4511e;border-radius:2.5px;"></div>
<div class="t " style="left:306.00px;top:648.13px;font-size:11.9px;color:#efefef;letter-spacing:0.28px;">file-storage</div>
<div class="t " style="left:1380.00px;top:648.21px;font-size:11.8px;color:#efefef;letter-spacing:-0.6px;">82.1%</div>
<div class="b" style="left:464.00px;top:642.00px;width:10.31px;height:24.00px;background:#35c48e;border-radius:3px;"></div>
<div class="b" style="left:476.31px;top:642.00px;width:10.31px;height:24.00px;background:#35c48e;border-radius:3px;"></div>
<div class="b" style="left:488.61px;top:642.00px;width:10.31px;height:24.00px;background:#e36a6a;border-radius:3px;"></div>
<div class="b" style="left:500.92px;top:642.00px;width:10.31px;height:24.00px;background:#e36a6a;border-radius:3px;"></div>
<div class="b" style="left:513.22px;top:642.00px;width:10.31px;height:24.00px;background:#e4ae2a;border-radius:3px;"></div>
<div class="b" style="left:525.53px;top:642.00px;width:10.31px;height:24.00px;background:#e36a6a;border-radius:3px;"></div>
<div class="b" style="left:537.83px;top:642.00px;width:10.31px;height:24.00px;background:#35c48e;border-radius:3px;"></div>
<div class="b" style="left:550.14px;top:642.00px;width:10.31px;height:24.00px;background:#e4ae2a;border-radius:3px;"></div>
<div class="b" style="left:562.44px;top:642.00px;width:10.31px;height:24.00px;background:#e4ae2a;border-radius:3px;"></div>
<div class="b" style="left:574.75px;top:642.00px;width:10.31px;height:24.00px;background:#35c48e;border-radius:3px;"></div>
<div class="b" style="left:587.06px;top:642.00px;width:10.31px;height:24.00px;background:#e36a6a;border-radius:3px;"></div>
<div class="b" style="left:599.36px;top:642.00px;width:10.31px;height:24.00px;background:#e4ae2a;border-radius:3px;"></div>
<div class="b" style="left:611.67px;top:642.00px;width:10.31px;height:24.00px;background:#e4ae2a;border-radius:3px;"></div>
<div class="b" style="left:623.97px;top:642.00px;width:10.31px;height:24.00px;background:#35c48e;border-radius:3px;"></div>
<div class="b" style="left:636.28px;top:642.00px;width:10.31px;height:24.00px;background:#e4ae2a;border-radius:3px;"></div>
<div class="b" style="left:648.58px;top:642.00px;width:10.31px;height:24.00px;background:#35c48e;border-radius:3px;"></div>
<div class="b" style="left:660.89px;top:642.00px;width:10.31px;height:24.00px;background:#35c48e;border-radius:3px;"></div>
<div class="b" style="left:673.19px;top:642.00px;width:10.31px;height:24.00px;background:#e4ae2a;border-radius:3px;"></div>
<div class="b" style="left:685.50px;top:642.00px;width:10.31px;height:24.00px;background:#35c48e;border-radius:3px;"></div>
<div class="b" style="left:697.81px;top:642.00px;width:10.31px;height:24.00px;background:#35c48e;border-radius:3px;"></div>
<div class="b" style="left:710.11px;top:642.00px;width:10.31px;height:24.00px;background:#35c48e;border-radius:3px;"></div>
<div class="b" style="left:722.42px;top:642.00px;width:10.31px;height:24.00px;background:#35c48e;border-radius:3px;"></div>
<div class="b" style="left:734.72px;top:642.00px;width:10.31px;height:24.00px;background:#35c48e;border-radius:3px;"></div>
<div class="b" style="left:747.03px;top:642.00px;width:10.31px;height:24.00px;background:#35c48e;border-radius:3px;"></div>
<div class="b" style="left:759.33px;top:642.00px;width:10.31px;height:24.00px;background:#35c48e;border-radius:3px;"></div>
<div class="b" style="left:771.64px;top:642.00px;width:10.31px;height:24.00px;background:#35c48e;border-radius:3px;"></div>
<div class="b" style="left:783.94px;top:642.00px;width:10.31px;height:24.00px;background:#35c48e;border-radius:3px;"></div>
<div class="b" style="left:796.25px;top:642.00px;width:10.31px;height:24.00px;background:#35c48e;border-radius:3px;"></div>
<div class="b" style="left:808.56px;top:642.00px;width:10.31px;height:24.00px;background:#35c48e;border-radius:3px;"></div>
<div class="b" style="left:820.86px;top:642.00px;width:10.31px;height:24.00px;background:#35c48e;border-radius:3px;"></div>
<div class="b" style="left:833.17px;top:642.00px;width:10.31px;height:24.00px;background:#35c48e;border-radius:3px;"></div>
<div class="b" style="left:845.47px;top:642.00px;width:10.31px;height:24.00px;background:#e4ae2a;border-radius:3px;"></div>
<div class="b" style="left:857.78px;top:642.00px;width:10.31px;height:24.00px;background:#35c48e;border-radius:3px;"></div>
<div class="b" style="left:870.08px;top:642.00px;width:10.31px;height:24.00px;background:#e36a6a;border-radius:3px;"></div>
<div class="b" style="left:882.39px;top:642.00px;width:10.31px;height:24.00px;background:#e36a6a;border-radius:3px;"></div>
<div class="b" style="left:894.69px;top:642.00px;width:10.31px;height:24.00px;background:#e36a6a;border-radius:3px;"></div>
<div class="b" style="left:907.00px;top:642.00px;width:10.31px;height:24.00px;background:#e36a6a;border-radius:3px;"></div>
<div class="b" style="left:919.31px;top:642.00px;width:10.31px;height:24.00px;background:#e36a6a;border-radius:3px;"></div>
<div class="b" style="left:931.61px;top:642.00px;width:10.31px;height:24.00px;background:#e36a6a;border-radius:3px;"></div>
<div class="b" style="left:943.92px;top:642.00px;width:10.31px;height:24.00px;background:#e36a6a;border-radius:3px;"></div>
<div class="b" style="left:956.22px;top:642.00px;width:10.31px;height:24.00px;background:#e36a6a;border-radius:3px;"></div>
<div class="b" style="left:968.53px;top:642.00px;width:10.31px;height:24.00px;background:#e36a6a;border-radius:3px;"></div>
<div class="b" style="left:980.83px;top:642.00px;width:10.31px;height:24.00px;background:#e36a6a;border-radius:3px;"></div>
<div class="b" style="left:993.14px;top:642.00px;width:10.31px;height:24.00px;background:#e36a6a;border-radius:3px;"></div>
<div class="b" style="left:1005.44px;top:642.00px;width:10.31px;height:24.00px;background:#e36a6a;border-radius:3px;"></div>
<div class="b" style="left:1017.75px;top:642.00px;width:10.31px;height:24.00px;background:#e36a6a;border-radius:3px;"></div>
<div class="b" style="left:1030.06px;top:642.00px;width:10.31px;height:24.00px;background:#e36a6a;border-radius:3px;"></div>
<div class="b" style="left:1042.36px;top:642.00px;width:10.31px;height:24.00px;background:#e36a6a;border-radius:3px;"></div>
<div class="b" style="left:1054.67px;top:642.00px;width:10.31px;height:24.00px;background:#e36a6a;border-radius:3px;"></div>
<div class="b" style="left:1066.97px;top:642.00px;width:10.31px;height:24.00px;background:#e36a6a;border-radius:3px;"></div>
<div class="b" style="left:1079.28px;top:642.00px;width:10.31px;height:24.00px;background:#e36a6a;border-radius:3px;"></div>
<div class="b" style="left:1091.58px;top:642.00px;width:10.31px;height:24.00px;background:#e36a6a;border-radius:3px;"></div>
<div class="b" style="left:1103.89px;top:642.00px;width:10.31px;height:24.00px;background:#e36a6a;border-radius:3px;"></div>
<div class="b" style="left:1116.19px;top:642.00px;width:10.31px;height:24.00px;background:#e36a6a;border-radius:3px;"></div>
<div class="b" style="left:1128.50px;top:642.00px;width:10.31px;height:24.00px;background:#e36a6a;border-radius:3px;"></div>
<div class="b" style="left:1140.81px;top:642.00px;width:10.31px;height:24.00px;background:#e36a6a;border-radius:3px;"></div>
<div class="b" style="left:1153.11px;top:642.00px;width:10.31px;height:24.00px;background:#e36a6a;border-radius:3px;"></div>
<div class="b" style="left:1165.42px;top:642.00px;width:10.31px;height:24.00px;background:#e36a6a;border-radius:3px;"></div>
<div class="b" style="left:1177.72px;top:642.00px;width:10.31px;height:24.00px;background:#e36a6a;border-radius:3px;"></div>
<div class="b" style="left:1190.03px;top:642.00px;width:10.31px;height:24.00px;background:#e36a6a;border-radius:3px;"></div>
<div class="b" style="left:1202.33px;top:642.00px;width:10.31px;height:24.00px;background:#e36a6a;border-radius:3px;"></div>
<div class="b" style="left:1214.64px;top:642.00px;width:10.31px;height:24.00px;background:#e36a6a;border-radius:3px;"></div>
<div class="b" style="left:1226.94px;top:642.00px;width:10.31px;height:24.00px;background:#e36a6a;border-radius:3px;"></div>
<div class="b" style="left:1239.25px;top:642.00px;width:10.31px;height:24.00px;background:#e36a6a;border-radius:3px;"></div>
<div class="b" style="left:1251.56px;top:642.00px;width:10.31px;height:24.00px;background:#e36a6a;border-radius:3px;"></div>
<div class="b" style="left:1263.86px;top:642.00px;width:10.31px;height:24.00px;background:#e36a6a;border-radius:3px;"></div>
<div class="b" style="left:1276.17px;top:642.00px;width:10.31px;height:24.00px;background:#e36a6a;border-radius:3px;"></div>
<div class="b" style="left:1288.47px;top:642.00px;width:10.31px;height:24.00px;background:#e36a6a;border-radius:3px;"></div>
<div class="b" style="left:1300.78px;top:642.00px;width:10.31px;height:24.00px;background:rgba(255,255,255,0.138);border-radius:3px;"></div>
<div class="b" style="left:1313.08px;top:642.00px;width:10.31px;height:24.00px;background:#35c48e;border-radius:3px;"></div>
<div class="b" style="left:1325.39px;top:642.00px;width:10.31px;height:24.00px;background:rgba(255,255,255,0.138);border-radius:3px;"></div>
<div class="b" style="left:1337.69px;top:642.00px;width:10.31px;height:24.00px;background:#35c48e;border-radius:3px;"></div>
<div class="b" style="left:288.00px;top:693.00px;width:10.00px;height:10.00px;background:#e6a817;border-radius:2.5px;"></div>
<div class="t " style="left:306.00px;top:692.13px;font-size:11.9px;color:#efefef;letter-spacing:0.28px;">file-url</div>
<div class="t " style="left:1380.00px;top:692.21px;font-size:11.8px;color:#efefef;letter-spacing:-0.3px;">82.4%</div>
<div class="b" style="left:464.00px;top:686.00px;width:10.31px;height:24.00px;background:#35c48e;border-radius:3px;"></div>
<div class="b" style="left:476.31px;top:686.00px;width:10.31px;height:24.00px;background:#35c48e;border-radius:3px;"></div>
<div class="b" style="left:488.61px;top:686.00px;width:10.31px;height:24.00px;background:#e36a6a;border-radius:3px;"></div>
<div class="b" style="left:500.92px;top:686.00px;width:10.31px;height:24.00px;background:#35c48e;border-radius:3px;"></div>
<div class="b" style="left:513.22px;top:686.00px;width:10.31px;height:24.00px;background:#e4ae2a;border-radius:3px;"></div>
<div class="b" style="left:525.53px;top:686.00px;width:10.31px;height:24.00px;background:#e36a6a;border-radius:3px;"></div>
<div class="b" style="left:537.83px;top:686.00px;width:10.31px;height:24.00px;background:#35c48e;border-radius:3px;"></div>
<div class="b" style="left:550.14px;top:686.00px;width:10.31px;height:24.00px;background:#35c48e;border-radius:3px;"></div>
<div class="b" style="left:562.44px;top:686.00px;width:10.31px;height:24.00px;background:#35c48e;border-radius:3px;"></div>
<div class="b" style="left:574.75px;top:686.00px;width:10.31px;height:24.00px;background:#35c48e;border-radius:3px;"></div>
<div class="b" style="left:587.06px;top:686.00px;width:10.31px;height:24.00px;background:#e36a6a;border-radius:3px;"></div>
<div class="b" style="left:599.36px;top:686.00px;width:10.31px;height:24.00px;background:#35c48e;border-radius:3px;"></div>
<div class="b" style="left:611.67px;top:686.00px;width:10.31px;height:24.00px;background:#35c48e;border-radius:3px;"></div>
<div class="b" style="left:623.97px;top:686.00px;width:10.31px;height:24.00px;background:#e4ae2a;border-radius:3px;"></div>
<div class="b" style="left:636.28px;top:686.00px;width:10.31px;height:24.00px;background:#e4ae2a;border-radius:3px;"></div>
<div class="b" style="left:648.58px;top:686.00px;width:10.31px;height:24.00px;background:#e4ae2a;border-radius:3px;"></div>
<div class="b" style="left:660.89px;top:686.00px;width:10.31px;height:24.00px;background:#35c48e;border-radius:3px;"></div>
<div class="b" style="left:673.19px;top:686.00px;width:10.31px;height:24.00px;background:#e4ae2a;border-radius:3px;"></div>
<div class="b" style="left:685.50px;top:686.00px;width:10.31px;height:24.00px;background:#35c48e;border-radius:3px;"></div>
<div class="b" style="left:697.81px;top:686.00px;width:10.31px;height:24.00px;background:#35c48e;border-radius:3px;"></div>
<div class="b" style="left:710.11px;top:686.00px;width:10.31px;height:24.00px;background:#35c48e;border-radius:3px;"></div>
<div class="b" style="left:722.42px;top:686.00px;width:10.31px;height:24.00px;background:#35c48e;border-radius:3px;"></div>
<div class="b" style="left:734.72px;top:686.00px;width:10.31px;height:24.00px;background:#35c48e;border-radius:3px;"></div>
<div class="b" style="left:747.03px;top:686.00px;width:10.31px;height:24.00px;background:#35c48e;border-radius:3px;"></div>
<div class="b" style="left:759.33px;top:686.00px;width:10.31px;height:24.00px;background:#35c48e;border-radius:3px;"></div>
<div class="b" style="left:771.64px;top:686.00px;width:10.31px;height:24.00px;background:#35c48e;border-radius:3px;"></div>
<div class="b" style="left:783.94px;top:686.00px;width:10.31px;height:24.00px;background:#35c48e;border-radius:3px;"></div>
<div class="b" style="left:796.25px;top:686.00px;width:10.31px;height:24.00px;background:#35c48e;border-radius:3px;"></div>
<div class="b" style="left:808.56px;top:686.00px;width:10.31px;height:24.00px;background:#35c48e;border-radius:3px;"></div>
<div class="b" style="left:820.86px;top:686.00px;width:10.31px;height:24.00px;background:#35c48e;border-radius:3px;"></div>
<div class="b" style="left:833.17px;top:686.00px;width:10.31px;height:24.00px;background:#35c48e;border-radius:3px;"></div>
<div class="b" style="left:845.47px;top:686.00px;width:10.31px;height:24.00px;background:#e36a6a;border-radius:3px;"></div>
<div class="b" style="left:857.78px;top:686.00px;width:10.31px;height:24.00px;background:#35c48e;border-radius:3px;"></div>
<div class="b" style="left:870.08px;top:686.00px;width:10.31px;height:24.00px;background:#e36a6a;border-radius:3px;"></div>
<div class="b" style="left:882.39px;top:686.00px;width:10.31px;height:24.00px;background:#e36a6a;border-radius:3px;"></div>
<div class="b" style="left:894.69px;top:686.00px;width:10.31px;height:24.00px;background:#e36a6a;border-radius:3px;"></div>
<div class="b" style="left:907.00px;top:686.00px;width:10.31px;height:24.00px;background:#e36a6a;border-radius:3px;"></div>
<div class="b" style="left:919.31px;top:686.00px;width:10.31px;height:24.00px;background:#e36a6a;border-radius:3px;"></div>
<div class="b" style="left:931.61px;top:686.00px;width:10.31px;height:24.00px;background:#e36a6a;border-radius:3px;"></div>
<div class="b" style="left:943.92px;top:686.00px;width:10.31px;height:24.00px;background:#e36a6a;border-radius:3px;"></div>
<div class="b" style="left:956.22px;top:686.00px;width:10.31px;height:24.00px;background:#e36a6a;border-radius:3px;"></div>
<div class="b" style="left:968.53px;top:686.00px;width:10.31px;height:24.00px;background:#e36a6a;border-radius:3px;"></div>
<div class="b" style="left:980.83px;top:686.00px;width:10.31px;height:24.00px;background:#e36a6a;border-radius:3px;"></div>
<div class="b" style="left:993.14px;top:686.00px;width:10.31px;height:24.00px;background:#e36a6a;border-radius:3px;"></div>
<div class="b" style="left:1005.44px;top:686.00px;width:10.31px;height:24.00px;background:#e36a6a;border-radius:3px;"></div>
<div class="b" style="left:1017.75px;top:686.00px;width:10.31px;height:24.00px;background:#e36a6a;border-radius:3px;"></div>
<div class="b" style="left:1030.06px;top:686.00px;width:10.31px;height:24.00px;background:#e36a6a;border-radius:3px;"></div>
<div class="b" style="left:1042.36px;top:686.00px;width:10.31px;height:24.00px;background:#e36a6a;border-radius:3px;"></div>
<div class="b" style="left:1054.67px;top:686.00px;width:10.31px;height:24.00px;background:#e36a6a;border-radius:3px;"></div>
<div class="b" style="left:1066.97px;top:686.00px;width:10.31px;height:24.00px;background:#e36a6a;border-radius:3px;"></div>
<div class="b" style="left:1079.28px;top:686.00px;width:10.31px;height:24.00px;background:#e36a6a;border-radius:3px;"></div>
<div class="b" style="left:1091.58px;top:686.00px;width:10.31px;height:24.00px;background:#e36a6a;border-radius:3px;"></div>
<div class="b" style="left:1103.89px;top:686.00px;width:10.31px;height:24.00px;background:#e36a6a;border-radius:3px;"></div>
<div class="b" style="left:1116.19px;top:686.00px;width:10.31px;height:24.00px;background:#e36a6a;border-radius:3px;"></div>
<div class="b" style="left:1128.50px;top:686.00px;width:10.31px;height:24.00px;background:#e36a6a;border-radius:3px;"></div>
<div class="b" style="left:1140.81px;top:686.00px;width:10.31px;height:24.00px;background:#e36a6a;border-radius:3px;"></div>
<div class="b" style="left:1153.11px;top:686.00px;width:10.31px;height:24.00px;background:#e36a6a;border-radius:3px;"></div>
<div class="b" style="left:1165.42px;top:686.00px;width:10.31px;height:24.00px;background:#e36a6a;border-radius:3px;"></div>
<div class="b" style="left:1177.72px;top:686.00px;width:10.31px;height:24.00px;background:#e36a6a;border-radius:3px;"></div>
<div class="b" style="left:1190.03px;top:686.00px;width:10.31px;height:24.00px;background:#e36a6a;border-radius:3px;"></div>
<div class="b" style="left:1202.33px;top:686.00px;width:10.31px;height:24.00px;background:#e36a6a;border-radius:3px;"></div>
<div class="b" style="left:1214.64px;top:686.00px;width:10.31px;height:24.00px;background:#e36a6a;border-radius:3px;"></div>
<div class="b" style="left:1226.94px;top:686.00px;width:10.31px;height:24.00px;background:#e36a6a;border-radius:3px;"></div>
<div class="b" style="left:1239.25px;top:686.00px;width:10.31px;height:24.00px;background:#e36a6a;border-radius:3px;"></div>
<div class="b" style="left:1251.56px;top:686.00px;width:10.31px;height:24.00px;background:#e36a6a;border-radius:3px;"></div>
<div class="b" style="left:1263.86px;top:686.00px;width:10.31px;height:24.00px;background:#e36a6a;border-radius:3px;"></div>
<div class="b" style="left:1276.17px;top:686.00px;width:10.31px;height:24.00px;background:#e36a6a;border-radius:3px;"></div>
<div class="b" style="left:1288.47px;top:686.00px;width:10.31px;height:24.00px;background:#e36a6a;border-radius:3px;"></div>
<div class="b" style="left:1300.78px;top:686.00px;width:10.31px;height:24.00px;background:rgba(255,255,255,0.138);border-radius:3px;"></div>
<div class="b" style="left:1313.08px;top:686.00px;width:10.31px;height:24.00px;background:#35c48e;border-radius:3px;"></div>
<div class="b" style="left:1325.39px;top:686.00px;width:10.31px;height:24.00px;background:rgba(255,255,255,0.138);border-radius:3px;"></div>
<div class="b" style="left:1337.69px;top:686.00px;width:10.31px;height:24.00px;background:#35c48e;border-radius:3px;"></div>
<div class="b" style="left:288.00px;top:737.00px;width:10.00px;height:10.00px;background:#5b2cf5;border-radius:2.5px;"></div>
<div class="t " style="left:306.00px;top:736.13px;font-size:11.9px;color:#efefef;letter-spacing:0.28px;">discord-getServerInfo...</div>
<div class="t " style="left:1380.00px;top:736.21px;font-size:11.8px;color:#efefef;letter-spacing:-0.3px;">47.6%</div>
<div class="b" style="left:464.00px;top:730.00px;width:10.31px;height:24.00px;background:#35c48e;border-radius:3px;"></div>
<div class="b" style="left:476.31px;top:730.00px;width:10.31px;height:24.00px;background:rgba(255,255,255,0.138);border-radius:3px;"></div>
<div class="b" style="left:488.61px;top:730.00px;width:10.31px;height:24.00px;background:#35c48e;border-radius:3px;"></div>
<div class="b" style="left:500.92px;top:730.00px;width:10.31px;height:24.00px;background:rgba(255,255,255,0.138);border-radius:3px;"></div>
<div class="b" style="left:513.22px;top:730.00px;width:10.31px;height:24.00px;background:rgba(255,255,255,0.138);border-radius:3px;"></div>
<div class="b" style="left:525.53px;top:730.00px;width:10.31px;height:24.00px;background:#35c48e;border-radius:3px;"></div>
<div class="b" style="left:537.83px;top:730.00px;width:10.31px;height:24.00px;background:rgba(255,255,255,0.138);border-radius:3px;"></div>
<div class="b" style="left:550.14px;top:730.00px;width:10.31px;height:24.00px;background:#35c48e;border-radius:3px;"></div>
<div class="b" style="left:562.44px;top:730.00px;width:10.31px;height:24.00px;background:rgba(255,255,255,0.138);border-radius:3px;"></div>
<div class="b" style="left:574.75px;top:730.00px;width:10.31px;height:24.00px;background:rgba(255,255,255,0.138);border-radius:3px;"></div>
<div class="b" style="left:587.06px;top:730.00px;width:10.31px;height:24.00px;background:#35c48e;border-radius:3px;"></div>
<div class="b" style="left:599.36px;top:730.00px;width:10.31px;height:24.00px;background:rgba(255,255,255,0.138);border-radius:3px;"></div>
<div class="b" style="left:611.67px;top:730.00px;width:10.31px;height:24.00px;background:#e36a6a;border-radius:3px;"></div>
<div class="b" style="left:623.97px;top:730.00px;width:10.31px;height:24.00px;background:rgba(255,255,255,0.138);border-radius:3px;"></div>
<div class="b" style="left:636.28px;top:730.00px;width:10.31px;height:24.00px;background:#e36a6a;border-radius:3px;"></div>
<div class="b" style="left:648.58px;top:730.00px;width:10.31px;height:24.00px;background:rgba(255,255,255,0.138);border-radius:3px;"></div>
<div class="b" style="left:660.89px;top:730.00px;width:10.31px;height:24.00px;background:rgba(255,255,255,0.138);border-radius:3px;"></div>
<div class="b" style="left:673.19px;top:730.00px;width:10.31px;height:24.00px;background:#35c48e;border-radius:3px;"></div>
<div class="b" style="left:685.50px;top:730.00px;width:10.31px;height:24.00px;background:rgba(255,255,255,0.138);border-radius:3px;"></div>
<div class="b" style="left:697.81px;top:730.00px;width:10.31px;height:24.00px;background:#35c48e;border-radius:3px;"></div>
<div class="b" style="left:710.11px;top:730.00px;width:10.31px;height:24.00px;background:rgba(255,255,255,0.138);border-radius:3px;"></div>
<div class="b" style="left:722.42px;top:730.00px;width:10.31px;height:24.00px;background:rgba(255,255,255,0.138);border-radius:3px;"></div>
<div class="b" style="left:734.72px;top:730.00px;width:10.31px;height:24.00px;background:#e36a6a;border-radius:3px;"></div>
<div class="b" style="left:747.03px;top:730.00px;width:10.31px;height:24.00px;background:rgba(255,255,255,0.138);border-radius:3px;"></div>
<div class="b" style="left:759.33px;top:730.00px;width:10.31px;height:24.00px;background:#e36a6a;border-radius:3px;"></div>
<div class="b" style="left:771.64px;top:730.00px;width:10.31px;height:24.00px;background:rgba(255,255,255,0.138);border-radius:3px;"></div>
<div class="b" style="left:783.94px;top:730.00px;width:10.31px;height:24.00px;background:#35c48e;border-radius:3px;"></div>
<div class="b" style="left:796.25px;top:730.00px;width:10.31px;height:24.00px;background:rgba(255,255,255,0.138);border-radius:3px;"></div>
<div class="b" style="left:808.56px;top:730.00px;width:10.31px;height:24.00px;background:rgba(255,255,255,0.138);border-radius:3px;"></div>
<div class="b" style="left:820.86px;top:730.00px;width:10.31px;height:24.00px;background:#35c48e;border-radius:3px;"></div>
<div class="b" style="left:833.17px;top:730.00px;width:10.31px;height:24.00px;background:rgba(255,255,255,0.138);border-radius:3px;"></div>
<div class="b" style="left:845.47px;top:730.00px;width:10.31px;height:24.00px;background:#e36a6a;border-radius:3px;"></div>
<div class="b" style="left:857.78px;top:730.00px;width:10.31px;height:24.00px;background:rgba(255,255,255,0.138);border-radius:3px;"></div>
<div class="b" style="left:870.08px;top:730.00px;width:10.31px;height:24.00px;background:rgba(255,255,255,0.138);border-radius:3px;"></div>
<div class="b" style="left:882.39px;top:730.00px;width:10.31px;height:24.00px;background:#e36a6a;border-radius:3px;"></div>
<div class="b" style="left:894.69px;top:730.00px;width:10.31px;height:24.00px;background:rgba(255,255,255,0.138);border-radius:3px;"></div>
<div class="b" style="left:907.00px;top:730.00px;width:10.31px;height:24.00px;background:#e36a6a;border-radius:3px;"></div>
<div class="b" style="left:919.31px;top:730.00px;width:10.31px;height:24.00px;background:rgba(255,255,255,0.138);border-radius:3px;"></div>
<div class="b" style="left:931.61px;top:730.00px;width:10.31px;height:24.00px;background:#35c48e;border-radius:3px;"></div>
<div class="b" style="left:943.92px;top:730.00px;width:10.31px;height:24.00px;background:rgba(255,255,255,0.138);border-radius:3px;"></div>
<div class="b" style="left:956.22px;top:730.00px;width:10.31px;height:24.00px;background:rgba(255,255,255,0.138);border-radius:3px;"></div>
<div class="b" style="left:968.53px;top:730.00px;width:10.31px;height:24.00px;background:#e36a6a;border-radius:3px;"></div>
<div class="b" style="left:980.83px;top:730.00px;width:10.31px;height:24.00px;background:rgba(255,255,255,0.138);border-radius:3px;"></div>
<div class="b" style="left:993.14px;top:730.00px;width:10.31px;height:24.00px;background:#e36a6a;border-radius:3px;"></div>
<div class="b" style="left:1005.44px;top:730.00px;width:10.31px;height:24.00px;background:rgba(255,255,255,0.138);border-radius:3px;"></div>
<div class="b" style="left:1017.75px;top:730.00px;width:10.31px;height:24.00px;background:rgba(255,255,255,0.138);border-radius:3px;"></div>
<div class="b" style="left:1030.06px;top:730.00px;width:10.31px;height:24.00px;background:#35c48e;border-radius:3px;"></div>
<div class="b" style="left:1042.36px;top:730.00px;width:10.31px;height:24.00px;background:rgba(255,255,255,0.138);border-radius:3px;"></div>
<div class="b" style="left:1054.67px;top:730.00px;width:10.31px;height:24.00px;background:#e36a6a;border-radius:3px;"></div>
<div class="b" style="left:1066.97px;top:730.00px;width:10.31px;height:24.00px;background:rgba(255,255,255,0.138);border-radius:3px;"></div>
<div class="b" style="left:1079.28px;top:730.00px;width:10.31px;height:24.00px;background:#e36a6a;border-radius:3px;"></div>
<div class="b" style="left:1091.58px;top:730.00px;width:10.31px;height:24.00px;background:rgba(255,255,255,0.138);border-radius:3px;"></div>
<div class="b" style="left:1103.89px;top:730.00px;width:10.31px;height:24.00px;background:rgba(255,255,255,0.138);border-radius:3px;"></div>
<div class="b" style="left:1116.19px;top:730.00px;width:10.31px;height:24.00px;background:#35c48e;border-radius:3px;"></div>
<div class="b" style="left:1128.50px;top:730.00px;width:10.31px;height:24.00px;background:rgba(255,255,255,0.138);border-radius:3px;"></div>
<div class="b" style="left:1140.81px;top:730.00px;width:10.31px;height:24.00px;background:#e36a6a;border-radius:3px;"></div>
<div class="b" style="left:1153.11px;top:730.00px;width:10.31px;height:24.00px;background:rgba(255,255,255,0.138);border-radius:3px;"></div>
<div class="b" style="left:1165.42px;top:730.00px;width:10.31px;height:24.00px;background:rgba(255,255,255,0.138);border-radius:3px;"></div>
<div class="b" style="left:1177.72px;top:730.00px;width:10.31px;height:24.00px;background:#e36a6a;border-radius:3px;"></div>
<div class="b" style="left:1190.03px;top:730.00px;width:10.31px;height:24.00px;background:rgba(255,255,255,0.138);border-radius:3px;"></div>
<div class="b" style="left:1202.33px;top:730.00px;width:10.31px;height:24.00px;background:#e36a6a;border-radius:3px;"></div>
<div class="b" style="left:1214.64px;top:730.00px;width:10.31px;height:24.00px;background:rgba(255,255,255,0.138);border-radius:3px;"></div>
<div class="b" style="left:1226.94px;top:730.00px;width:10.31px;height:24.00px;background:#e36a6a;border-radius:3px;"></div>
<div class="b" style="left:1239.25px;top:730.00px;width:10.31px;height:24.00px;background:rgba(255,255,255,0.138);border-radius:3px;"></div>
<div class="b" style="left:1251.56px;top:730.00px;width:10.31px;height:24.00px;background:rgba(255,255,255,0.138);border-radius:3px;"></div>
<div class="b" style="left:1263.86px;top:730.00px;width:10.31px;height:24.00px;background:#e36a6a;border-radius:3px;"></div>
<div class="b" style="left:1276.17px;top:730.00px;width:10.31px;height:24.00px;background:rgba(255,255,255,0.138);border-radius:3px;"></div>
<div class="b" style="left:1288.47px;top:730.00px;width:10.31px;height:24.00px;background:#e36a6a;border-radius:3px;"></div>
<div class="b" style="left:1300.78px;top:730.00px;width:10.31px;height:24.00px;background:rgba(255,255,255,0.138);border-radius:3px;"></div>
<div class="b" style="left:1313.08px;top:730.00px;width:10.31px;height:24.00px;background:rgba(255,255,255,0.138);border-radius:3px;"></div>
<div class="b" style="left:1325.39px;top:730.00px;width:10.31px;height:24.00px;background:#35c48e;border-radius:3px;"></div>
<div class="b" style="left:1337.69px;top:730.00px;width:10.31px;height:24.00px;background:rgba(255,255,255,0.138);border-radius:3px;"></div>
<div class="b" style="left:288.00px;top:781.00px;width:10.00px;height:10.00px;background:#e0163c;border-radius:2.5px;"></div>
<div class="t " style="left:306.00px;top:780.13px;font-size:11.9px;color:#efefef;letter-spacing:0.28px;">discord-getChannelM...</div>
<div class="t " style="left:1380.00px;top:780.21px;font-size:11.8px;color:#efefef;letter-spacing:-0.3px;">45.5%</div>
<div class="b" style="left:464.00px;top:774.00px;width:10.31px;height:24.00px;background:#35c48e;border-radius:3px;"></div>
<div class="b" style="left:476.31px;top:774.00px;width:10.31px;height:24.00px;background:rgba(255,255,255,0.138);border-radius:3px;"></div>
<div class="b" style="left:488.61px;top:774.00px;width:10.31px;height:24.00px;background:#35c48e;border-radius:3px;"></div>
<div class="b" style="left:500.92px;top:774.00px;width:10.31px;height:24.00px;background:rgba(255,255,255,0.138);border-radius:3px;"></div>
<div class="b" style="left:513.22px;top:774.00px;width:10.31px;height:24.00px;background:rgba(255,255,255,0.138);border-radius:3px;"></div>
<div class="b" style="left:525.53px;top:774.00px;width:10.31px;height:24.00px;background:#e36a6a;border-radius:3px;"></div>
<div class="b" style="left:537.83px;top:774.00px;width:10.31px;height:24.00px;background:rgba(255,255,255,0.138);border-radius:3px;"></div>
<div class="b" style="left:550.14px;top:774.00px;width:10.31px;height:24.00px;background:#35c48e;border-radius:3px;"></div>
<div class="b" style="left:562.44px;top:774.00px;width:10.31px;height:24.00px;background:rgba(255,255,255,0.138);border-radius:3px;"></div>
<div class="b" style="left:574.75px;top:774.00px;width:10.31px;height:24.00px;background:rgba(255,255,255,0.138);border-radius:3px;"></div>
<div class="b" style="left:587.06px;top:774.00px;width:10.31px;height:24.00px;background:#35c48e;border-radius:3px;"></div>
<div class="b" style="left:599.36px;top:774.00px;width:10.31px;height:24.00px;background:rgba(255,255,255,0.138);border-radius:3px;"></div>
<div class="b" style="left:611.67px;top:774.00px;width:10.31px;height:24.00px;background:#e36a6a;border-radius:3px;"></div>
<div class="b" style="left:623.97px;top:774.00px;width:10.31px;height:24.00px;background:rgba(255,255,255,0.138);border-radius:3px;"></div>
<div class="b" style="left:636.28px;top:774.00px;width:10.31px;height:24.00px;background:#e36a6a;border-radius:3px;"></div>
<div class="b" style="left:648.58px;top:774.00px;width:10.31px;height:24.00px;background:rgba(255,255,255,0.138);border-radius:3px;"></div>
<div class="b" style="left:660.89px;top:774.00px;width:10.31px;height:24.00px;background:rgba(255,255,255,0.138);border-radius:3px;"></div>
<div class="b" style="left:673.19px;top:774.00px;width:10.31px;height:24.00px;background:#e36a6a;border-radius:3px;"></div>
<div class="b" style="left:685.50px;top:774.00px;width:10.31px;height:24.00px;background:rgba(255,255,255,0.138);border-radius:3px;"></div>
<div class="b" style="left:697.81px;top:774.00px;width:10.31px;height:24.00px;background:#35c48e;border-radius:3px;"></div>
<div class="b" style="left:710.11px;top:774.00px;width:10.31px;height:24.00px;background:rgba(255,255,255,0.138);border-radius:3px;"></div>
<div class="b" style="left:722.42px;top:774.00px;width:10.31px;height:24.00px;background:rgba(255,255,255,0.138);border-radius:3px;"></div>
<div class="b" style="left:734.72px;top:774.00px;width:10.31px;height:24.00px;background:#35c48e;border-radius:3px;"></div>
<div class="b" style="left:747.03px;top:774.00px;width:10.31px;height:24.00px;background:rgba(255,255,255,0.138);border-radius:3px;"></div>
<div class="b" style="left:759.33px;top:774.00px;width:10.31px;height:24.00px;background:#e36a6a;border-radius:3px;"></div>
<div class="b" style="left:771.64px;top:774.00px;width:10.31px;height:24.00px;background:rgba(255,255,255,0.138);border-radius:3px;"></div>
<div class="b" style="left:783.94px;top:774.00px;width:10.31px;height:24.00px;background:#e36a6a;border-radius:3px;"></div>
<div class="b" style="left:796.25px;top:774.00px;width:10.31px;height:24.00px;background:rgba(255,255,255,0.138);border-radius:3px;"></div>
<div class="b" style="left:808.56px;top:774.00px;width:10.31px;height:24.00px;background:rgba(255,255,255,0.138);border-radius:3px;"></div>
<div class="b" style="left:820.86px;top:774.00px;width:10.31px;height:24.00px;background:#35c48e;border-radius:3px;"></div>
<div class="b" style="left:833.17px;top:774.00px;width:10.31px;height:24.00px;background:rgba(255,255,255,0.138);border-radius:3px;"></div>
<div class="b" style="left:845.47px;top:774.00px;width:10.31px;height:24.00px;background:#35c48e;border-radius:3px;"></div>
<div class="b" style="left:857.78px;top:774.00px;width:10.31px;height:24.00px;background:rgba(255,255,255,0.138);border-radius:3px;"></div>
<div class="b" style="left:870.08px;top:774.00px;width:10.31px;height:24.00px;background:rgba(255,255,255,0.138);border-radius:3px;"></div>
<div class="b" style="left:882.39px;top:774.00px;width:10.31px;height:24.00px;background:#35c48e;border-radius:3px;"></div>
<div class="b" style="left:894.69px;top:774.00px;width:10.31px;height:24.00px;background:rgba(255,255,255,0.138);border-radius:3px;"></div>
<div class="b" style="left:907.00px;top:774.00px;width:10.31px;height:24.00px;background:#e36a6a;border-radius:3px;"></div>
<div class="b" style="left:919.31px;top:774.00px;width:10.31px;height:24.00px;background:rgba(255,255,255,0.138);border-radius:3px;"></div>
<div class="b" style="left:931.61px;top:774.00px;width:10.31px;height:24.00px;background:#35c48e;border-radius:3px;"></div>
<div class="b" style="left:943.92px;top:774.00px;width:10.31px;height:24.00px;background:rgba(255,255,255,0.138);border-radius:3px;"></div>
<div class="b" style="left:956.22px;top:774.00px;width:10.31px;height:24.00px;background:rgba(255,255,255,0.138);border-radius:3px;"></div>
<div class="b" style="left:968.53px;top:774.00px;width:10.31px;height:24.00px;background:#e36a6a;border-radius:3px;"></div>
<div class="b" style="left:980.83px;top:774.00px;width:10.31px;height:24.00px;background:rgba(255,255,255,0.138);border-radius:3px;"></div>
<div class="b" style="left:993.14px;top:774.00px;width:10.31px;height:24.00px;background:#35c48e;border-radius:3px;"></div>
<div class="b" style="left:1005.44px;top:774.00px;width:10.31px;height:24.00px;background:rgba(255,255,255,0.138);border-radius:3px;"></div>
<div class="b" style="left:1017.75px;top:774.00px;width:10.31px;height:24.00px;background:rgba(255,255,255,0.138);border-radius:3px;"></div>
<div class="b" style="left:1030.06px;top:774.00px;width:10.31px;height:24.00px;background:#e36a6a;border-radius:3px;"></div>
<div class="b" style="left:1042.36px;top:774.00px;width:10.31px;height:24.00px;background:rgba(255,255,255,0.138);border-radius:3px;"></div>
<div class="b" style="left:1054.67px;top:774.00px;width:10.31px;height:24.00px;background:#e36a6a;border-radius:3px;"></div>
<div class="b" style="left:1066.97px;top:774.00px;width:10.31px;height:24.00px;background:rgba(255,255,255,0.138);border-radius:3px;"></div>
<div class="b" style="left:1079.28px;top:774.00px;width:10.31px;height:24.00px;background:#35c48e;border-radius:3px;"></div>
<div class="b" style="left:1091.58px;top:774.00px;width:10.31px;height:24.00px;background:rgba(255,255,255,0.138);border-radius:3px;"></div>
<div class="b" style="left:1103.89px;top:774.00px;width:10.31px;height:24.00px;background:rgba(255,255,255,0.138);border-radius:3px;"></div>
<div class="b" style="left:1116.19px;top:774.00px;width:10.31px;height:24.00px;background:#35c48e;border-radius:3px;"></div>
<div class="b" style="left:1128.50px;top:774.00px;width:10.31px;height:24.00px;background:rgba(255,255,255,0.138);border-radius:3px;"></div>
<div class="b" style="left:1140.81px;top:774.00px;width:10.31px;height:24.00px;background:#e36a6a;border-radius:3px;"></div>
<div class="b" style="left:1153.11px;top:774.00px;width:10.31px;height:24.00px;background:rgba(255,255,255,0.138);border-radius:3px;"></div>
<div class="b" style="left:1165.42px;top:774.00px;width:10.31px;height:24.00px;background:rgba(255,255,255,0.138);border-radius:3px;"></div>
<div class="b" style="left:1177.72px;top:774.00px;width:10.31px;height:24.00px;background:#e36a6a;border-radius:3px;"></div>
<div class="b" style="left:1190.03px;top:774.00px;width:10.31px;height:24.00px;background:rgba(255,255,255,0.138);border-radius:3px;"></div>
<div class="b" style="left:1202.33px;top:774.00px;width:10.31px;height:24.00px;background:#e36a6a;border-radius:3px;"></div>
<div class="b" style="left:1214.64px;top:774.00px;width:10.31px;height:24.00px;background:rgba(255,255,255,0.138);border-radius:3px;"></div>
<div class="b" style="left:1226.94px;top:774.00px;width:10.31px;height:24.00px;background:#e36a6a;border-radius:3px;"></div>
<div class="b" style="left:1239.25px;top:774.00px;width:10.31px;height:24.00px;background:rgba(255,255,255,0.138);border-radius:3px;"></div>
<div class="b" style="left:1251.56px;top:774.00px;width:10.31px;height:24.00px;background:rgba(255,255,255,0.138);border-radius:3px;"></div>
<div class="b" style="left:1263.86px;top:774.00px;width:10.31px;height:24.00px;background:#e36a6a;border-radius:3px;"></div>
<div class="b" style="left:1276.17px;top:774.00px;width:10.31px;height:24.00px;background:rgba(255,255,255,0.138);border-radius:3px;"></div>
<div class="b" style="left:1288.47px;top:774.00px;width:10.31px;height:24.00px;background:#e36a6a;border-radius:3px;"></div>
<div class="b" style="left:1300.78px;top:774.00px;width:10.31px;height:24.00px;background:rgba(255,255,255,0.138);border-radius:3px;"></div>
<div class="b" style="left:1313.08px;top:774.00px;width:10.31px;height:24.00px;background:rgba(255,255,255,0.138);border-radius:3px;"></div>
<div class="b" style="left:1325.39px;top:774.00px;width:10.31px;height:24.00px;background:#35c48e;border-radius:3px;"></div>
<div class="b" style="left:1337.69px;top:774.00px;width:10.31px;height:24.00px;background:rgba(255,255,255,0.138);border-radius:3px;"></div>
<div class="b" style="left:288.00px;top:825.00px;width:10.00px;height:10.00px;background:#e0163c;border-radius:2.5px;"></div>
<div class="t " style="left:306.00px;top:824.13px;font-size:11.9px;color:#efefef;letter-spacing:0.28px;">discord-sendMessage</div>
<div class="t " style="left:1380.00px;top:824.21px;font-size:11.8px;color:#efefef;letter-spacing:-0.3px;">53.6%</div>
<div class="b" style="left:464.00px;top:818.00px;width:10.31px;height:24.00px;background:#35c48e;border-radius:3px;"></div>
<div class="b" style="left:476.31px;top:818.00px;width:10.31px;height:24.00px;background:rgba(255,255,255,0.138);border-radius:3px;"></div>
<div class="b" style="left:488.61px;top:818.00px;width:10.31px;height:24.00px;background:#e36a6a;border-radius:3px;"></div>
<div class="b" style="left:500.92px;top:818.00px;width:10.31px;height:24.00px;background:rgba(255,255,255,0.138);border-radius:3px;"></div>
<div class="b" style="left:513.22px;top:818.00px;width:10.31px;height:24.00px;background:rgba(255,255,255,0.138);border-radius:3px;"></div>
<div class="b" style="left:525.53px;top:818.00px;width:10.31px;height:24.00px;background:#35c48e;border-radius:3px;"></div>
<div class="b" style="left:537.83px;top:818.00px;width:10.31px;height:24.00px;background:rgba(255,255,255,0.138);border-radius:3px;"></div>
<div class="b" style="left:550.14px;top:818.00px;width:10.31px;height:24.00px;background:#35c48e;border-radius:3px;"></div>
<div class="b" style="left:562.44px;top:818.00px;width:10.31px;height:24.00px;background:rgba(255,255,255,0.138);border-radius:3px;"></div>
<div class="b" style="left:574.75px;top:818.00px;width:10.31px;height:24.00px;background:rgba(255,255,255,0.138);border-radius:3px;"></div>
<div class="b" style="left:587.06px;top:818.00px;width:10.31px;height:24.00px;background:#35c48e;border-radius:3px;"></div>
<div class="b" style="left:599.36px;top:818.00px;width:10.31px;height:24.00px;background:rgba(255,255,255,0.138);border-radius:3px;"></div>
<div class="b" style="left:611.67px;top:818.00px;width:10.31px;height:24.00px;background:#35c48e;border-radius:3px;"></div>
<div class="b" style="left:623.97px;top:818.00px;width:10.31px;height:24.00px;background:rgba(255,255,255,0.138);border-radius:3px;"></div>
<div class="b" style="left:636.28px;top:818.00px;width:10.31px;height:24.00px;background:#e36a6a;border-radius:3px;"></div>
<div class="b" style="left:648.58px;top:818.00px;width:10.31px;height:24.00px;background:rgba(255,255,255,0.138);border-radius:3px;"></div>
<div class="b" style="left:660.89px;top:818.00px;width:10.31px;height:24.00px;background:rgba(255,255,255,0.138);border-radius:3px;"></div>
<div class="b" style="left:673.19px;top:818.00px;width:10.31px;height:24.00px;background:#35c48e;border-radius:3px;"></div>
<div class="b" style="left:685.50px;top:818.00px;width:10.31px;height:24.00px;background:rgba(255,255,255,0.138);border-radius:3px;"></div>
<div class="b" style="left:697.81px;top:818.00px;width:10.31px;height:24.00px;background:#35c48e;border-radius:3px;"></div>
<div class="b" style="left:710.11px;top:818.00px;width:10.31px;height:24.00px;background:rgba(255,255,255,0.138);border-radius:3px;"></div>
<div class="b" style="left:722.42px;top:818.00px;width:10.31px;height:24.00px;background:rgba(255,255,255,0.138);border-radius:3px;"></div>
<div class="b" style="left:734.72px;top:818.00px;width:10.31px;height:24.00px;background:#e36a6a;border-radius:3px;"></div>
<div class="b" style="left:747.03px;top:818.00px;width:10.31px;height:24.00px;background:rgba(255,255,255,0.138);border-radius:3px;"></div>
<div class="b" style="left:759.33px;top:818.00px;width:10.31px;height:24.00px;background:#35c48e;border-radius:3px;"></div>
<div class="b" style="left:771.64px;top:818.00px;width:10.31px;height:24.00px;background:rgba(255,255,255,0.138);border-radius:3px;"></div>
<div class="b" style="left:783.94px;top:818.00px;width:10.31px;height:24.00px;background:#35c48e;border-radius:3px;"></div>
<div class="b" style="left:796.25px;top:818.00px;width:10.31px;height:24.00px;background:rgba(255,255,255,0.138);border-radius:3px;"></div>
<div class="b" style="left:808.56px;top:818.00px;width:10.31px;height:24.00px;background:rgba(255,255,255,0.138);border-radius:3px;"></div>
<div class="b" style="left:820.86px;top:818.00px;width:10.31px;height:24.00px;background:#e36a6a;border-radius:3px;"></div>
<div class="b" style="left:833.17px;top:818.00px;width:10.31px;height:24.00px;background:rgba(255,255,255,0.138);border-radius:3px;"></div>
<div class="b" style="left:845.47px;top:818.00px;width:10.31px;height:24.00px;background:#e36a6a;border-radius:3px;"></div>
<div class="b" style="left:857.78px;top:818.00px;width:10.31px;height:24.00px;background:rgba(255,255,255,0.138);border-radius:3px;"></div>
<div class="b" style="left:870.08px;top:818.00px;width:10.31px;height:24.00px;background:rgba(255,255,255,0.138);border-radius:3px;"></div>
<div class="b" style="left:882.39px;top:818.00px;width:10.31px;height:24.00px;background:#e36a6a;border-radius:3px;"></div>
<div class="b" style="left:894.69px;top:818.00px;width:10.31px;height:24.00px;background:rgba(255,255,255,0.138);border-radius:3px;"></div>
<div class="b" style="left:907.00px;top:818.00px;width:10.31px;height:24.00px;background:#e36a6a;border-radius:3px;"></div>
<div class="b" style="left:919.31px;top:818.00px;width:10.31px;height:24.00px;background:rgba(255,255,255,0.138);border-radius:3px;"></div>
<div class="b" style="left:931.61px;top:818.00px;width:10.31px;height:24.00px;background:#e36a6a;border-radius:3px;"></div>
<div class="b" style="left:943.92px;top:818.00px;width:10.31px;height:24.00px;background:rgba(255,255,255,0.138);border-radius:3px;"></div>
<div class="b" style="left:956.22px;top:818.00px;width:10.31px;height:24.00px;background:rgba(255,255,255,0.138);border-radius:3px;"></div>
<div class="b" style="left:968.53px;top:818.00px;width:10.31px;height:24.00px;background:#e36a6a;border-radius:3px;"></div>
<div class="b" style="left:980.83px;top:818.00px;width:10.31px;height:24.00px;background:rgba(255,255,255,0.138);border-radius:3px;"></div>
<div class="b" style="left:993.14px;top:818.00px;width:10.31px;height:24.00px;background:#35c48e;border-radius:3px;"></div>
<div class="b" style="left:1005.44px;top:818.00px;width:10.31px;height:24.00px;background:rgba(255,255,255,0.138);border-radius:3px;"></div>
<div class="b" style="left:1017.75px;top:818.00px;width:10.31px;height:24.00px;background:rgba(255,255,255,0.138);border-radius:3px;"></div>
<div class="b" style="left:1030.06px;top:818.00px;width:10.31px;height:24.00px;background:#e36a6a;border-radius:3px;"></div>
<div class="b" style="left:1042.36px;top:818.00px;width:10.31px;height:24.00px;background:rgba(255,255,255,0.138);border-radius:3px;"></div>
<div class="b" style="left:1054.67px;top:818.00px;width:10.31px;height:24.00px;background:#e36a6a;border-radius:3px;"></div>
<div class="b" style="left:1066.97px;top:818.00px;width:10.31px;height:24.00px;background:rgba(255,255,255,0.138);border-radius:3px;"></div>
<div class="b" style="left:1079.28px;top:818.00px;width:10.31px;height:24.00px;background:#e36a6a;border-radius:3px;"></div>
<div class="b" style="left:1091.58px;top:818.00px;width:10.31px;height:24.00px;background:rgba(255,255,255,0.138);border-radius:3px;"></div>
<div class="b" style="left:1103.89px;top:818.00px;width:10.31px;height:24.00px;background:rgba(255,255,255,0.138);border-radius:3px;"></div>
<div class="b" style="left:1116.19px;top:818.00px;width:10.31px;height:24.00px;background:#e36a6a;border-radius:3px;"></div>
<div class="b" style="left:1128.50px;top:818.00px;width:10.31px;height:24.00px;background:rgba(255,255,255,0.138);border-radius:3px;"></div>
<div class="b" style="left:1140.81px;top:818.00px;width:10.31px;height:24.00px;background:#e36a6a;border-radius:3px;"></div>
<div class="b" style="left:1153.11px;top:818.00px;width:10.31px;height:24.00px;background:rgba(255,255,255,0.138);border-radius:3px;"></div>
<div class="b" style="left:1165.42px;top:818.00px;width:10.31px;height:24.00px;background:rgba(255,255,255,0.138);border-radius:3px;"></div>
<div class="b" style="left:1177.72px;top:818.00px;width:10.31px;height:24.00px;background:#e36a6a;border-radius:3px;"></div>
<div class="b" style="left:1190.03px;top:818.00px;width:10.31px;height:24.00px;background:rgba(255,255,255,0.138);border-radius:3px;"></div>
<div class="b" style="left:1202.33px;top:818.00px;width:10.31px;height:24.00px;background:#e36a6a;border-radius:3px;"></div>
<div class="b" style="left:1214.64px;top:818.00px;width:10.31px;height:24.00px;background:rgba(255,255,255,0.138);border-radius:3px;"></div>
<div class="b" style="left:1226.94px;top:818.00px;width:10.31px;height:24.00px;background:#35c48e;border-radius:3px;"></div>
<div class="b" style="left:1239.25px;top:818.00px;width:10.31px;height:24.00px;background:rgba(255,255,255,0.138);border-radius:3px;"></div>
<div class="b" style="left:1251.56px;top:818.00px;width:10.31px;height:24.00px;background:rgba(255,255,255,0.138);border-radius:3px;"></div>
<div class="b" style="left:1263.86px;top:818.00px;width:10.31px;height:24.00px;background:#35c48e;border-radius:3px;"></div>
<div class="b" style="left:1276.17px;top:818.00px;width:10.31px;height:24.00px;background:rgba(255,255,255,0.138);border-radius:3px;"></div>
<div class="b" style="left:1288.47px;top:818.00px;width:10.31px;height:24.00px;background:#e36a6a;border-radius:3px;"></div>
<div class="b" style="left:1300.78px;top:818.00px;width:10.31px;height:24.00px;background:rgba(255,255,255,0.138);border-radius:3px;"></div>
<div class="b" style="left:1313.08px;top:818.00px;width:10.31px;height:24.00px;background:rgba(255,255,255,0.138);border-radius:3px;"></div>
<div class="b" style="left:1325.39px;top:818.00px;width:10.31px;height:24.00px;background:#35c48e;border-radius:3px;"></div>
<div class="b" style="left:1337.69px;top:818.00px;width:10.31px;height:24.00px;background:rgba(255,255,255,0.138);border-radius:3px;"></div>
</div>
<div class="b" style="left:0;top:-20px;width:1512px;height:877px;border-radius:0 0 8px 8px;box-shadow:inset 0 0 0 0.6px #3c3c3c;pointer-events:none;"></div>
</div></body></html>
